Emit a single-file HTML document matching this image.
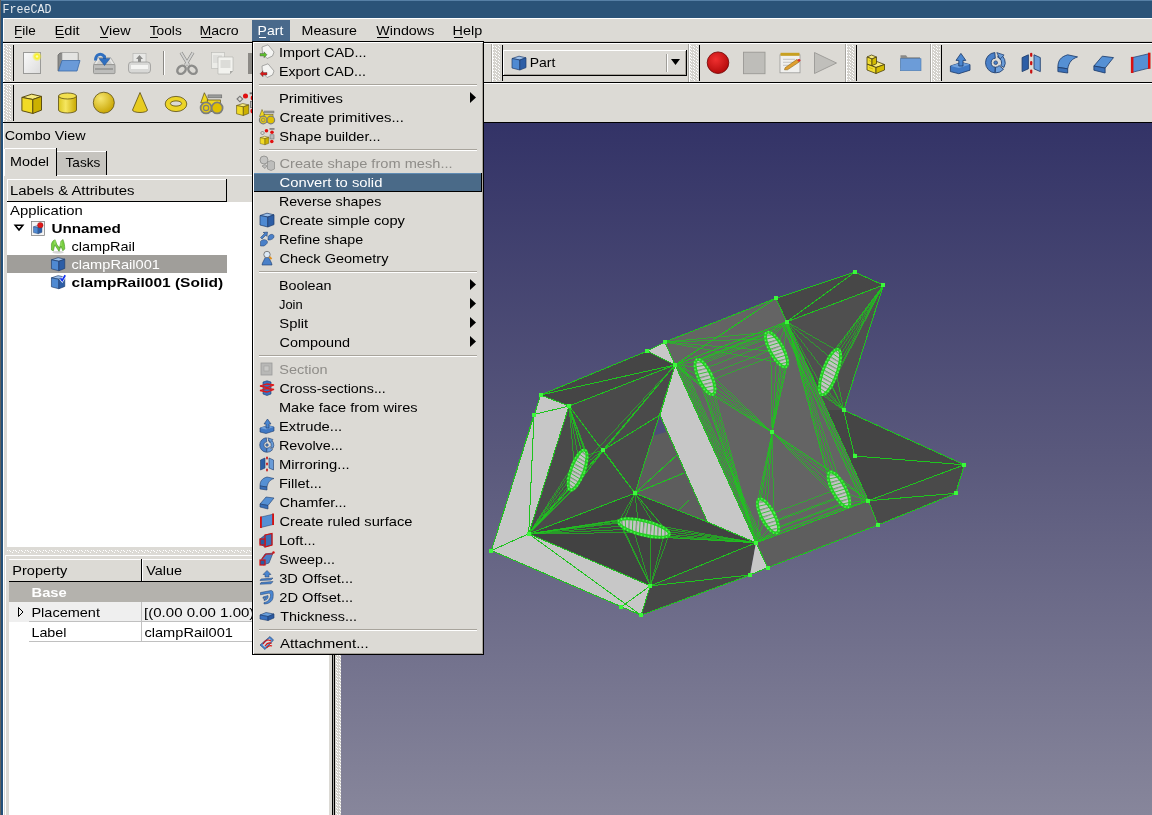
<!DOCTYPE html><html><head><meta charset="utf-8"><style>html,body{margin:0;padding:0;overflow:hidden;background:#dcdad5}svg{display:block;will-change:transform}text{font-family:"Liberation Sans",sans-serif;font-size:13.6px}</style></head><body>
<svg width="1152" height="815" viewBox="0 0 1152 815" shape-rendering="crispEdges">
<defs>
<linearGradient id="vbg" x1="0" y1="0" x2="0" y2="1"><stop offset="0" stop-color="#333367"/><stop offset="0.5" stop-color="#5b5a7d"/><stop offset="1" stop-color="#87869b"/></linearGradient>
<pattern id="grip" x="0" y="0" width="6" height="3" patternUnits="userSpaceOnUse"><rect x="0" y="0" width="1" height="1" fill="#fff"/><rect x="1" y="1" width="1" height="1" fill="#fff"/><rect x="3" y="1" width="1" height="1" fill="#fff"/><rect x="4" y="2" width="1" height="1" fill="#fff"/></pattern>
<pattern id="griph" x="0" y="0" width="3" height="6" patternUnits="userSpaceOnUse"><rect x="0" y="0" width="1" height="1" fill="#fff"/><rect x="1" y="1" width="1" height="1" fill="#fff"/><rect x="1" y="3" width="1" height="1" fill="#fff"/><rect x="2" y="4" width="1" height="1" fill="#fff"/></pattern>
</defs>
<rect x="0" y="0" width="1152" height="815" fill="#dcdad5" />
<rect x="0" y="0" width="1152" height="18" fill="#2b5378" />
<rect x="0" y="0" width="1152" height="1" fill="#5780a6" />
<rect x="0" y="0" width="1" height="815" fill="#606060" />
<rect x="1" y="1" width="2" height="814" fill="#23507a" />
<text x="2.5" y="13" textLength="49" lengthAdjust="spacingAndGlyphs" fill="#f4f6f8" opacity="0.92" style="font-family:'Liberation Mono',monospace;font-size:12.5px">FreeCAD</text>
<rect x="3" y="18" width="1149" height="24" fill="#dcdad5" />
<rect x="3" y="18" width="1149" height="1" fill="#ffffff" />
<rect x="3" y="18" width="1" height="24" fill="#ffffff" />
<rect x="3" y="41" width="1149" height="1" fill="#c8c6c1" />
<rect x="3" y="42" width="1149" height="1" fill="#000000" />
<rect x="252" y="20" width="38" height="21" fill="#49698b" />
<text x="13.92" y="35" textLength="21.76" lengthAdjust="spacingAndGlyphs" fill="#000000">File</text>
<rect x="15" y="37" width="7" height="1" fill="#000000" />
<text x="54.52" y="35" textLength="25.18" lengthAdjust="spacingAndGlyphs" fill="#000000">Edit</text>
<rect x="56" y="37" width="8" height="1" fill="#000000" />
<text x="99.70" y="35" textLength="30.85" lengthAdjust="spacingAndGlyphs" fill="#000000">View</text>
<rect x="100" y="37" width="8" height="1" fill="#000000" />
<text x="149.74" y="35" textLength="32.02" lengthAdjust="spacingAndGlyphs" fill="#000000">Tools</text>
<rect x="150" y="37" width="8" height="1" fill="#000000" />
<text x="199.42" y="35" textLength="39.34" lengthAdjust="spacingAndGlyphs" fill="#000000">Macro</text>
<rect x="201" y="37" width="11" height="1" fill="#000000" />
<text x="257.62" y="35" textLength="25.66" lengthAdjust="spacingAndGlyphs" fill="#ffffff">Part</text>
<rect x="259" y="37" width="7" height="1" fill="#ffffff" />
<text x="301.62" y="35" textLength="55.25" lengthAdjust="spacingAndGlyphs" fill="#000000">Measure</text>
<text x="376.27" y="35" textLength="58.03" lengthAdjust="spacingAndGlyphs" fill="#000000">Windows</text>
<rect x="377" y="37" width="12" height="1" fill="#000000" />
<text x="452.52" y="35" textLength="29.64" lengthAdjust="spacingAndGlyphs" fill="#000000">Help</text>
<rect x="454" y="37" width="9" height="1" fill="#000000" />
<rect x="3" y="43" width="1149" height="1" fill="#ffffff" />
<rect x="3" y="82" width="1149" height="1" fill="#000000" />
<rect x="3" y="43" width="1" height="39" fill="#ffffff" />
<rect x="3" y="83" width="1149" height="1" fill="#ffffff" />
<rect x="3" y="122" width="1149" height="1" fill="#000000" />
<rect x="3" y="83" width="1" height="39" fill="#ffffff" />
<rect x="4" y="45" width="8" height="36" fill="#d4d2cd" />
<rect x="4" y="45" width="8" height="36" fill="url(#grip)" />
<rect x="13" y="45" width="1" height="36" fill="#000" />
<rect x="4" y="85" width="8" height="36" fill="#d4d2cd" />
<rect x="4" y="85" width="8" height="36" fill="url(#grip)" />
<rect x="13" y="85" width="1" height="36" fill="#000" />
<rect x="491" y="44" width="1" height="38" fill="#a8a6a1" />
<rect x="492" y="44" width="1" height="38" fill="#ffffff" />
<rect x="493" y="45" width="8" height="36" fill="#d4d2cd" />
<rect x="493" y="45" width="8" height="36" fill="url(#grip)" />
<rect x="502" y="45" width="1" height="36" fill="#000" />
<rect x="688" y="44" width="1" height="38" fill="#a8a6a1" />
<rect x="689" y="44" width="1" height="38" fill="#ffffff" />
<rect x="690" y="45" width="8" height="36" fill="#d4d2cd" />
<rect x="690" y="45" width="8" height="36" fill="url(#grip)" />
<rect x="699" y="45" width="1" height="36" fill="#000" />
<rect x="845" y="44" width="1" height="38" fill="#a8a6a1" />
<rect x="846" y="44" width="1" height="38" fill="#ffffff" />
<rect x="847" y="45" width="8" height="36" fill="#d4d2cd" />
<rect x="847" y="45" width="8" height="36" fill="url(#grip)" />
<rect x="856" y="45" width="1" height="36" fill="#000" />
<rect x="930" y="44" width="1" height="38" fill="#a8a6a1" />
<rect x="931" y="44" width="1" height="38" fill="#ffffff" />
<rect x="932" y="45" width="8" height="36" fill="#d4d2cd" />
<rect x="932" y="45" width="8" height="36" fill="url(#grip)" />
<rect x="941" y="45" width="1" height="36" fill="#000" />
<rect x="503" y="50" width="184" height="26" fill="#dcdad5" />
<rect x="503" y="50" width="184" height="1" fill="#ffffff" />
<rect x="503" y="50" width="1" height="26" fill="#ffffff" />
<rect x="503" y="75" width="184" height="1" fill="#000000" />
<rect x="686" y="50" width="1" height="26" fill="#000000" />
<rect x="667" y="54" width="1" height="18" fill="#ffffff" />
<rect x="666" y="54" width="1" height="18" fill="#a09e99" />
<rect x="685" y="51" width="1" height="24" fill="#a8a49c" />
<rect x="504" y="74" width="182" height="1" fill="#a8a49c" />
<polygon points="671,59 680,59 675.5,65" fill="#000" shape-rendering="geometricPrecision"/>
<text x="529.72" y="67" textLength="25.66" lengthAdjust="spacingAndGlyphs" fill="#000">Part</text>
<rect x="332" y="123" width="1" height="692" fill="#000" />
<rect x="334" y="123" width="1" height="692" fill="#000" />
<rect x="333" y="123" width="1" height="692" fill="#a8a6a1" />
<rect x="335" y="123" width="8" height="692" fill="#d4d2cd" />
<rect x="335" y="123" width="8" height="692" fill="url(#grip)" />
<rect x="335" y="123" width="6" height="692" fill="url(#grip)" />
<text x="4.67" y="140" textLength="80.88" lengthAdjust="spacingAndGlyphs" fill="#000">Combo View</text>
<rect x="7" y="179" width="325" height="1" fill="#ffffff" />
<rect x="3" y="123" width="1" height="692" fill="#ffffff" />
<rect x="57" y="151" width="50" height="24" fill="#c6c4bf" />
<rect x="57" y="151" width="49" height="1" fill="#ffffff" />
<rect x="106" y="151" width="1" height="24" fill="#000" />
<text x="65.54" y="167" textLength="34.83" lengthAdjust="spacingAndGlyphs" fill="#000">Tasks</text>
<rect x="4" y="148" width="53" height="32" fill="#dcdad5" />
<rect x="5" y="148" width="51" height="1" fill="#ffffff" />
<rect x="4" y="149" width="1" height="27" fill="#ffffff" />
<rect x="56" y="148" width="1" height="28" fill="#000" />
<rect x="57" y="175" width="275" height="1" fill="#ffffff" />
<text x="10.02" y="166" textLength="39.03" lengthAdjust="spacingAndGlyphs" fill="#000">Model</text>
<rect x="7" y="180" width="322" height="367" fill="#ffffff" />
<rect x="7" y="179" width="220" height="23" fill="#dcdad5" />
<rect x="7" y="179" width="220" height="1" fill="#ffffff" />
<rect x="7" y="179" width="1" height="23" fill="#ffffff" />
<rect x="7" y="201" width="220" height="1" fill="#000" />
<rect x="226" y="179" width="1" height="23" fill="#000" />
<rect x="227" y="179" width="102" height="23" fill="#dcdad5" />
<text x="10.02" y="195" textLength="124.42" lengthAdjust="spacingAndGlyphs" fill="#000">Labels &amp; Attributes</text>
<text x="10.10" y="215" textLength="72.64" lengthAdjust="spacingAndGlyphs" fill="#000">Application</text>
<rect x="7" y="255" width="220" height="18" fill="#a09e9a" />
<text x="51.41" y="233" textLength="69.51" lengthAdjust="spacingAndGlyphs" fill="#000" font-weight="bold">Unnamed</text>
<text x="71.48" y="251" textLength="63.58" lengthAdjust="spacingAndGlyphs" fill="#000">clampRail</text>
<text x="71.48" y="269" textLength="88.39" lengthAdjust="spacingAndGlyphs" fill="#ffffff">clampRail001</text>
<text x="71.64" y="287" textLength="151.54" lengthAdjust="spacingAndGlyphs" fill="#000" font-weight="bold">clampRail001 (Solid)</text>
<polygon points="15.2,225.2 22.8,225.2 19,230" fill="none" stroke="#000" stroke-width="1.6" stroke-linejoin="miter" shape-rendering="geometricPrecision"/>
<rect x="4" y="547" width="328" height="8" fill="#dcdad5" />
<rect x="7" y="550" width="322" height="3" fill="url(#grip)"/>
<rect x="4" y="555" width="328" height="260" fill="#dcdad5" />
<rect x="5" y="555" width="327" height="1" fill="#ffffff" />
<rect x="5" y="555" width="1" height="260" fill="#ffffff" />
<rect x="9" y="559" width="320" height="256" fill="#ffffff" />
<rect x="9" y="559" width="320" height="22" fill="#dcdad5" />
<rect x="9" y="559" width="320" height="1" fill="#ffffff" />
<rect x="9" y="581" width="320" height="1" fill="#000" />
<rect x="141" y="559" width="1" height="22" fill="#000" />
<rect x="142" y="560" width="1" height="21" fill="#ffffff" />
<text x="12.32" y="575" textLength="55.01" lengthAdjust="spacingAndGlyphs" fill="#000">Property</text>
<text x="146.30" y="575" textLength="35.70" lengthAdjust="spacingAndGlyphs" fill="#000">Value</text>
<rect x="9" y="582" width="320" height="20" fill="#b4b2ad" />
<text x="31.51" y="597" textLength="35.24" lengthAdjust="spacingAndGlyphs" fill="#ffffff" font-weight="bold">Base</text>
<rect x="9" y="602" width="320" height="20" fill="#efefef" />
<rect x="29" y="621" width="300" height="1" fill="#c0c0c0" />
<rect x="29" y="641" width="300" height="1" fill="#c0c0c0" />
<rect x="141" y="602" width="1" height="39" fill="#c0c0c0" />
<text x="31.42" y="617" textLength="68.56" lengthAdjust="spacingAndGlyphs" fill="#000">Placement</text>
<text x="144.08" y="617" textLength="110.31" lengthAdjust="spacingAndGlyphs" fill="#000">[(0.00 0.00 1.00)</text>
<text x="31.42" y="637" textLength="35.07" lengthAdjust="spacingAndGlyphs" fill="#000">Label</text>
<text x="144.48" y="637" textLength="88.39" lengthAdjust="spacingAndGlyphs" fill="#000">clampRail001</text>
<polygon points="18.5,607.5 18.5,616.5 23,612" fill="none" stroke="#000" stroke-width="1" shape-rendering="geometricPrecision"/>
<rect x="341" y="123" width="811" height="692" fill="url(#vbg)" />
<rect x="335" y="122" width="817" height="1" fill="#000" />
<g shape-rendering="geometricPrecision">
<polygon points="827,410 843.6,410.1 964.4,464.8 868.4,500.7" fill="#454545"/>
<polygon points="868.4,500.7 964.4,464.8 955.6,493.4 878.1,524.9" fill="#4a4a4a"/>
<polygon points="775.9,298.3 854.8,272.2 883.4,285.1 786.7,321.8" fill="#474747"/>
<polygon points="786.7,321.8 883.4,285.1 843.6,410.1 827,410" fill="#4f4f4f"/>
<polygon points="569,406 675.1,364.9 635,493.2 528.7,533.8" fill="#4a4a4a"/>
<polygon points="675.1,364.9 660,415 707.5,522 635,493.2" fill="#5d5d5d"/>
<polygon points="660,415 654,435.6 666,432" fill="#4e4d78"/>
<polygon points="528.7,533.8 635,493.2 707.5,522 756,542.8 650.4,585.8" fill="#424242"/>
<polygon points="540.6,395 647.4,351 675.1,364.9 569,406" fill="#454545"/>
<polygon points="647.4,351 664.8,342 675.1,364.9" fill="#c7c7c7"/>
<polygon points="540.6,395 569,406 528.7,533.8 491.4,550.5" fill="#c7c7c7"/>
<polygon points="491.4,550.5 528.7,533.8 650.4,585.8 641,615.2" fill="#c7c7c7"/>
<polygon points="650.4,585.8 756,542.8 750,575 641,615.2" fill="#474747"/>
<polygon points="675.1,364.9 756,542.8 707.5,522 660,415" fill="#c7c7c7"/>
<polygon points="664.8,342 775.9,298.3 786.7,321.8 675.1,364.9" fill="#646464"/>
<polygon points="675.1,364.9 786.7,321.8 868.4,500.7 756,542.8" fill="#646464"/>
<polygon points="756,542.8 868.4,500.7 878.1,524.9 767.7,567.6" fill="#5e5e5e"/>
<polygon points="756,542.8 767.7,567.6 750,575" fill="#c7c7c7"/>
<g shape-rendering="crispEdges">
<line x1="491.4" y1="550.5" x2="540.6" y2="395" stroke="#1ec41e" stroke-width="1"/>
<line x1="540.6" y1="395" x2="647.4" y2="351" stroke="#1ec41e" stroke-width="1"/>
<line x1="647.4" y1="351" x2="664.8" y2="342" stroke="#1ec41e" stroke-width="1"/>
<line x1="664.8" y1="342" x2="775.9" y2="298.3" stroke="#1ec41e" stroke-width="1"/>
<line x1="775.9" y1="298.3" x2="854.8" y2="272.2" stroke="#1ec41e" stroke-width="1"/>
<line x1="854.8" y1="272.2" x2="883.4" y2="285.1" stroke="#1ec41e" stroke-width="1"/>
<line x1="883.4" y1="285.1" x2="843.6" y2="410.1" stroke="#1ec41e" stroke-width="1"/>
<line x1="843.6" y1="410.1" x2="964.4" y2="464.8" stroke="#1ec41e" stroke-width="1"/>
<line x1="964.4" y1="464.8" x2="955.6" y2="493.4" stroke="#1ec41e" stroke-width="1"/>
<line x1="955.6" y1="493.4" x2="878.1" y2="524.9" stroke="#1ec41e" stroke-width="1"/>
<line x1="878.1" y1="524.9" x2="767.7" y2="567.6" stroke="#1ec41e" stroke-width="1"/>
<line x1="767.7" y1="567.6" x2="750" y2="575" stroke="#1ec41e" stroke-width="1"/>
<line x1="750" y1="575" x2="641" y2="615.2" stroke="#1ec41e" stroke-width="1"/>
<line x1="641" y1="615.2" x2="491.4" y2="550.5" stroke="#1ec41e" stroke-width="1"/>
<line x1="540.6" y1="395" x2="569" y2="406" stroke="#1ec41e" stroke-width="1"/>
<line x1="540.6" y1="395" x2="675.1" y2="364.9" stroke="#1ec41e" stroke-width="1"/>
<line x1="569" y1="406" x2="675.1" y2="364.9" stroke="#1ec41e" stroke-width="1"/>
<line x1="647.4" y1="351" x2="675.1" y2="364.9" stroke="#1ec41e" stroke-width="1"/>
<line x1="664.8" y1="342" x2="675.1" y2="364.9" stroke="#1ec41e" stroke-width="1"/>
<line x1="675.1" y1="364.9" x2="786.7" y2="321.8" stroke="#1ec41e" stroke-width="1"/>
<line x1="775.9" y1="298.3" x2="786.7" y2="321.8" stroke="#1ec41e" stroke-width="1"/>
<line x1="786.7" y1="321.8" x2="883.4" y2="285.1" stroke="#1ec41e" stroke-width="1"/>
<line x1="786.7" y1="321.8" x2="868.4" y2="500.7" stroke="#1ec41e" stroke-width="1"/>
<line x1="868.4" y1="500.7" x2="756" y2="542.8" stroke="#1ec41e" stroke-width="1"/>
<line x1="756" y1="542.8" x2="675.1" y2="364.9" stroke="#1ec41e" stroke-width="1"/>
<line x1="868.4" y1="500.7" x2="964.4" y2="464.8" stroke="#1ec41e" stroke-width="1"/>
<line x1="868.4" y1="500.7" x2="878.1" y2="524.9" stroke="#1ec41e" stroke-width="1"/>
<line x1="756" y1="542.8" x2="767.7" y2="567.6" stroke="#1ec41e" stroke-width="1"/>
<line x1="569" y1="406" x2="528.7" y2="533.8" stroke="#1ec41e" stroke-width="1"/>
<line x1="528.7" y1="533.8" x2="491.4" y2="550.5" stroke="#1ec41e" stroke-width="1"/>
<line x1="528.7" y1="533.8" x2="650.4" y2="585.8" stroke="#1ec41e" stroke-width="1"/>
<line x1="650.4" y1="585.8" x2="641" y2="615.2" stroke="#1ec41e" stroke-width="1"/>
<line x1="650.4" y1="585.8" x2="756" y2="542.8" stroke="#1ec41e" stroke-width="1"/>
<line x1="534.1" y1="414.5" x2="569" y2="406" stroke="#1ec41e" stroke-width="1"/>
<line x1="491.4" y1="550.5" x2="534.1" y2="414.5" stroke="#1ec41e" stroke-width="1"/>
<line x1="534.1" y1="414.5" x2="528.7" y2="533.8" stroke="#1ec41e" stroke-width="1"/>
<line x1="621.3" y1="606.8" x2="650.4" y2="585.8" stroke="#1ec41e" stroke-width="1"/>
<line x1="491.4" y1="550.5" x2="621.3" y2="606.8" stroke="#1ec41e" stroke-width="1"/>
<line x1="528.7" y1="533.8" x2="635" y2="493.2" stroke="#1ec41e" stroke-width="1"/>
<line x1="635" y1="493.2" x2="603" y2="450.2" stroke="#1ec41e" stroke-width="1"/>
<line x1="603" y1="450.2" x2="660" y2="415" stroke="#1ec41e" stroke-width="1"/>
<line x1="603" y1="450.2" x2="675.1" y2="364.9" stroke="#1ec41e" stroke-width="1"/>
<line x1="635" y1="493.2" x2="675.1" y2="364.9" stroke="#1ec41e" stroke-width="1"/>
<line x1="660" y1="415" x2="707.5" y2="522" stroke="#1ec41e" stroke-width="1"/>
<line x1="707.5" y1="522" x2="756" y2="542.8" stroke="#1ec41e" stroke-width="1"/>
<line x1="635" y1="493.2" x2="707.5" y2="522" stroke="#1ec41e" stroke-width="1"/>
<line x1="854.8" y1="272.2" x2="786.7" y2="321.8" stroke="#1ec41e" stroke-width="1"/>
<line x1="675.1" y1="364.9" x2="775.9" y2="298.3" stroke="#1ec41e" stroke-width="1"/>
<line x1="854.6" y1="456" x2="964.4" y2="464.8" stroke="#1ec41e" stroke-width="1"/>
<line x1="868.4" y1="500.7" x2="955.6" y2="493.4" stroke="#1ec41e" stroke-width="1"/>
<line x1="843.6" y1="410.1" x2="854.6" y2="456" stroke="#1ec41e" stroke-width="1"/>
<line x1="650.4" y1="585.8" x2="750" y2="575" stroke="#1ec41e" stroke-width="1"/>
<line x1="528.7" y1="533.8" x2="641" y2="615.2" stroke="#1ec41e" stroke-width="1"/>
<line x1="569" y1="406" x2="635" y2="493.2" stroke="#1ec41e" stroke-width="1"/>
<line x1="603" y1="450.2" x2="528.7" y2="533.8" stroke="#1ec41e" stroke-width="1"/>
<line x1="675.1" y1="364.9" x2="660" y2="415" stroke="#1ec41e" stroke-width="1"/>
</g>
<g shape-rendering="crispEdges">
<line x1="695.0" y1="364.3" x2="765.5" y2="337.2" stroke="#1ec41e" stroke-width="0.8" opacity="0.85"/>
<line x1="695.8" y1="361.0" x2="765.9" y2="333.7" stroke="#1ec41e" stroke-width="0.8" opacity="0.85"/>
<line x1="697.6" y1="359.6" x2="767.7" y2="332.2" stroke="#1ec41e" stroke-width="0.8" opacity="0.85"/>
<line x1="700.4" y1="360.3" x2="770.5" y2="332.8" stroke="#1ec41e" stroke-width="0.8" opacity="0.85"/>
<line x1="703.7" y1="363.2" x2="774.1" y2="335.5" stroke="#1ec41e" stroke-width="0.8" opacity="0.85"/>
<line x1="707.2" y1="367.7" x2="778.0" y2="339.9" stroke="#1ec41e" stroke-width="0.8" opacity="0.85"/>
<line x1="710.5" y1="373.3" x2="781.7" y2="345.5" stroke="#1ec41e" stroke-width="0.8" opacity="0.85"/>
<line x1="713.0" y1="379.5" x2="784.7" y2="351.5" stroke="#1ec41e" stroke-width="0.8" opacity="0.85"/>
<line x1="713.0" y1="394.2" x2="675.1" y2="364.9" stroke="#1ec41e" stroke-width="0.8" opacity="0.85"/>
<line x1="709.5" y1="393.6" x2="675.1" y2="364.9" stroke="#1ec41e" stroke-width="0.8" opacity="0.85"/>
<line x1="705.0" y1="389.3" x2="675.1" y2="364.9" stroke="#1ec41e" stroke-width="0.8" opacity="0.85"/>
<line x1="700.4" y1="382.4" x2="675.1" y2="364.9" stroke="#1ec41e" stroke-width="0.8" opacity="0.85"/>
<line x1="696.9" y1="374.3" x2="675.1" y2="364.9" stroke="#1ec41e" stroke-width="0.8" opacity="0.85"/>
<line x1="695.2" y1="366.8" x2="675.1" y2="364.9" stroke="#1ec41e" stroke-width="0.8" opacity="0.85"/>
<line x1="695.5" y1="361.5" x2="675.1" y2="364.9" stroke="#1ec41e" stroke-width="0.8" opacity="0.85"/>
<line x1="710.9" y1="374.3" x2="772.1" y2="432.4" stroke="#1ec41e" stroke-width="0.8" opacity="0.85"/>
<line x1="713.4" y1="380.8" x2="772.1" y2="432.4" stroke="#1ec41e" stroke-width="0.8" opacity="0.85"/>
<line x1="714.8" y1="386.8" x2="772.1" y2="432.4" stroke="#1ec41e" stroke-width="0.8" opacity="0.85"/>
<line x1="714.8" y1="391.4" x2="772.1" y2="432.4" stroke="#1ec41e" stroke-width="0.8" opacity="0.85"/>
<line x1="713.4" y1="394.0" x2="772.1" y2="432.4" stroke="#1ec41e" stroke-width="0.8" opacity="0.85"/>
<line x1="710.8" y1="394.2" x2="772.1" y2="432.4" stroke="#1ec41e" stroke-width="0.8" opacity="0.85"/>
<line x1="714.5" y1="392.5" x2="756.0" y2="542.8" stroke="#1ec41e" stroke-width="0.8" opacity="0.85"/>
<line x1="712.6" y1="394.4" x2="756.0" y2="542.8" stroke="#1ec41e" stroke-width="0.8" opacity="0.85"/>
<line x1="709.8" y1="393.8" x2="756.0" y2="542.8" stroke="#1ec41e" stroke-width="0.8" opacity="0.85"/>
<line x1="706.2" y1="390.8" x2="756.0" y2="542.8" stroke="#1ec41e" stroke-width="0.8" opacity="0.85"/>
<line x1="702.5" y1="385.9" x2="756.0" y2="542.8" stroke="#1ec41e" stroke-width="0.8" opacity="0.85"/>
<line x1="699.1" y1="379.7" x2="756.0" y2="542.8" stroke="#1ec41e" stroke-width="0.8" opacity="0.85"/>
<line x1="765.5" y1="337.6" x2="786.7" y2="321.8" stroke="#1ec41e" stroke-width="0.8" opacity="0.85"/>
<line x1="766.3" y1="333.1" x2="786.7" y2="321.8" stroke="#1ec41e" stroke-width="0.8" opacity="0.85"/>
<line x1="769.4" y1="332.3" x2="786.7" y2="321.8" stroke="#1ec41e" stroke-width="0.8" opacity="0.85"/>
<line x1="774.1" y1="335.5" x2="786.7" y2="321.8" stroke="#1ec41e" stroke-width="0.8" opacity="0.85"/>
<line x1="779.4" y1="341.8" x2="786.7" y2="321.8" stroke="#1ec41e" stroke-width="0.8" opacity="0.85"/>
<line x1="783.9" y1="349.8" x2="786.7" y2="321.8" stroke="#1ec41e" stroke-width="0.8" opacity="0.85"/>
<line x1="782.2" y1="346.3" x2="772.1" y2="432.4" stroke="#1ec41e" stroke-width="0.8" opacity="0.85"/>
<line x1="786.2" y1="355.3" x2="772.1" y2="432.4" stroke="#1ec41e" stroke-width="0.8" opacity="0.85"/>
<line x1="787.5" y1="362.7" x2="772.1" y2="432.4" stroke="#1ec41e" stroke-width="0.8" opacity="0.85"/>
<line x1="786.0" y1="366.6" x2="772.1" y2="432.4" stroke="#1ec41e" stroke-width="0.8" opacity="0.85"/>
<line x1="781.8" y1="365.8" x2="772.1" y2="432.4" stroke="#1ec41e" stroke-width="0.8" opacity="0.85"/>
<line x1="776.3" y1="360.8" x2="772.1" y2="432.4" stroke="#1ec41e" stroke-width="0.8" opacity="0.85"/>
<line x1="770.8" y1="352.7" x2="772.1" y2="432.4" stroke="#1ec41e" stroke-width="0.8" opacity="0.85"/>
<line x1="777.5" y1="362.1" x2="664.8" y2="342.0" stroke="#1ec41e" stroke-width="0.8" opacity="0.85"/>
<line x1="769.9" y1="350.9" x2="664.8" y2="342.0" stroke="#1ec41e" stroke-width="0.8" opacity="0.85"/>
<line x1="765.7" y1="338.9" x2="664.8" y2="342.0" stroke="#1ec41e" stroke-width="0.8" opacity="0.85"/>
<line x1="767.0" y1="332.4" x2="664.8" y2="342.0" stroke="#1ec41e" stroke-width="0.8" opacity="0.85"/>
<line x1="762.3" y1="519.1" x2="772.1" y2="432.4" stroke="#1ec41e" stroke-width="0.8" opacity="0.85"/>
<line x1="758.1" y1="508.6" x2="772.1" y2="432.4" stroke="#1ec41e" stroke-width="0.8" opacity="0.85"/>
<line x1="757.7" y1="501.0" x2="772.1" y2="432.4" stroke="#1ec41e" stroke-width="0.8" opacity="0.85"/>
<line x1="761.3" y1="499.1" x2="772.1" y2="432.4" stroke="#1ec41e" stroke-width="0.8" opacity="0.85"/>
<line x1="767.4" y1="503.7" x2="772.1" y2="432.4" stroke="#1ec41e" stroke-width="0.8" opacity="0.85"/>
<line x1="773.7" y1="512.9" x2="772.1" y2="432.4" stroke="#1ec41e" stroke-width="0.8" opacity="0.85"/>
<line x1="778.6" y1="527.8" x2="756.0" y2="542.8" stroke="#1ec41e" stroke-width="0.8" opacity="0.85"/>
<line x1="777.6" y1="532.3" x2="756.0" y2="542.8" stroke="#1ec41e" stroke-width="0.8" opacity="0.85"/>
<line x1="774.2" y1="532.7" x2="756.0" y2="542.8" stroke="#1ec41e" stroke-width="0.8" opacity="0.85"/>
<line x1="769.3" y1="529.0" x2="756.0" y2="542.8" stroke="#1ec41e" stroke-width="0.8" opacity="0.85"/>
<line x1="764.0" y1="522.1" x2="756.0" y2="542.8" stroke="#1ec41e" stroke-width="0.8" opacity="0.85"/>
<line x1="759.8" y1="513.7" x2="756.0" y2="542.8" stroke="#1ec41e" stroke-width="0.8" opacity="0.85"/>
<line x1="773.7" y1="512.9" x2="844.7" y2="486.4" stroke="#1ec41e" stroke-width="0.8" opacity="0.85"/>
<line x1="777.2" y1="520.9" x2="848.3" y2="494.6" stroke="#1ec41e" stroke-width="0.8" opacity="0.85"/>
<line x1="778.6" y1="527.8" x2="849.8" y2="501.6" stroke="#1ec41e" stroke-width="0.8" opacity="0.85"/>
<line x1="777.7" y1="532.1" x2="848.9" y2="506.0" stroke="#1ec41e" stroke-width="0.8" opacity="0.85"/>
<line x1="774.7" y1="532.9" x2="845.9" y2="506.8" stroke="#1ec41e" stroke-width="0.8" opacity="0.85"/>
<line x1="770.2" y1="530.0" x2="841.4" y2="503.8" stroke="#1ec41e" stroke-width="0.8" opacity="0.85"/>
<line x1="765.3" y1="524.1" x2="836.4" y2="497.7" stroke="#1ec41e" stroke-width="0.8" opacity="0.85"/>
<line x1="836.4" y1="497.7" x2="772.1" y2="432.4" stroke="#1ec41e" stroke-width="0.8" opacity="0.85"/>
<line x1="831.6" y1="489.3" x2="772.1" y2="432.4" stroke="#1ec41e" stroke-width="0.8" opacity="0.85"/>
<line x1="828.7" y1="480.9" x2="772.1" y2="432.4" stroke="#1ec41e" stroke-width="0.8" opacity="0.85"/>
<line x1="828.4" y1="474.6" x2="772.1" y2="432.4" stroke="#1ec41e" stroke-width="0.8" opacity="0.85"/>
<line x1="830.6" y1="472.0" x2="772.1" y2="432.4" stroke="#1ec41e" stroke-width="0.8" opacity="0.85"/>
<line x1="835.0" y1="473.8" x2="772.1" y2="432.4" stroke="#1ec41e" stroke-width="0.8" opacity="0.85"/>
<line x1="832.1" y1="472.2" x2="868.4" y2="500.7" stroke="#1ec41e" stroke-width="0.8" opacity="0.85"/>
<line x1="837.6" y1="476.2" x2="868.4" y2="500.7" stroke="#1ec41e" stroke-width="0.8" opacity="0.85"/>
<line x1="843.5" y1="484.3" x2="868.4" y2="500.7" stroke="#1ec41e" stroke-width="0.8" opacity="0.85"/>
<line x1="848.1" y1="494.1" x2="868.4" y2="500.7" stroke="#1ec41e" stroke-width="0.8" opacity="0.85"/>
<line x1="849.8" y1="502.4" x2="868.4" y2="500.7" stroke="#1ec41e" stroke-width="0.8" opacity="0.85"/>
<line x1="848.2" y1="506.7" x2="868.4" y2="500.7" stroke="#1ec41e" stroke-width="0.8" opacity="0.85"/>
<line x1="829.0" y1="481.8" x2="786.7" y2="321.8" stroke="#1ec41e" stroke-width="0.8" opacity="0.85"/>
<line x1="828.2" y1="475.5" x2="786.7" y2="321.8" stroke="#1ec41e" stroke-width="0.8" opacity="0.85"/>
<line x1="829.8" y1="472.3" x2="786.7" y2="321.8" stroke="#1ec41e" stroke-width="0.8" opacity="0.85"/>
<line x1="833.4" y1="472.8" x2="786.7" y2="321.8" stroke="#1ec41e" stroke-width="0.8" opacity="0.85"/>
<line x1="838.3" y1="476.9" x2="786.7" y2="321.8" stroke="#1ec41e" stroke-width="0.8" opacity="0.85"/>
<line x1="676.0" y1="366.0" x2="756.0" y2="542.0" stroke="#1ec41e" stroke-width="0.8" opacity="0.85"/>
<line x1="677.4" y1="365.6" x2="757.4" y2="541.6" stroke="#1ec41e" stroke-width="0.8" opacity="0.85"/>
<line x1="678.8" y1="365.2" x2="758.8" y2="541.2" stroke="#1ec41e" stroke-width="0.8" opacity="0.85"/>
<line x1="680.2" y1="364.8" x2="760.2" y2="540.8" stroke="#1ec41e" stroke-width="0.8" opacity="0.85"/>
<line x1="681.6" y1="364.4" x2="761.6" y2="540.4" stroke="#1ec41e" stroke-width="0.8" opacity="0.85"/>
<line x1="683.0" y1="364.0" x2="763.0" y2="540.0" stroke="#1ec41e" stroke-width="0.8" opacity="0.85"/>
<line x1="787.0" y1="323.0" x2="868.0" y2="500.0" stroke="#1ec41e" stroke-width="0.8" opacity="0.85"/>
<line x1="785.8" y1="323.5" x2="866.5" y2="500.5" stroke="#1ec41e" stroke-width="0.8" opacity="0.85"/>
<line x1="784.5" y1="324.0" x2="865.0" y2="501.0" stroke="#1ec41e" stroke-width="0.8" opacity="0.85"/>
<line x1="783.2" y1="324.5" x2="863.5" y2="501.5" stroke="#1ec41e" stroke-width="0.8" opacity="0.85"/>
<line x1="782.0" y1="325.0" x2="862.0" y2="502.0" stroke="#1ec41e" stroke-width="0.8" opacity="0.85"/>
<line x1="829.5" y1="356.8" x2="883.4" y2="285.1" stroke="#1ec41e" stroke-width="0.8" opacity="0.85"/>
<line x1="833.5" y1="351.6" x2="883.4" y2="285.1" stroke="#1ec41e" stroke-width="0.8" opacity="0.85"/>
<line x1="837.0" y1="349.4" x2="883.4" y2="285.1" stroke="#1ec41e" stroke-width="0.8" opacity="0.85"/>
<line x1="839.4" y1="350.5" x2="883.4" y2="285.1" stroke="#1ec41e" stroke-width="0.8" opacity="0.85"/>
<line x1="840.5" y1="354.9" x2="883.4" y2="285.1" stroke="#1ec41e" stroke-width="0.8" opacity="0.85"/>
<line x1="840.0" y1="361.7" x2="883.4" y2="285.1" stroke="#1ec41e" stroke-width="0.8" opacity="0.85"/>
<line x1="838.0" y1="370.1" x2="883.4" y2="285.1" stroke="#1ec41e" stroke-width="0.8" opacity="0.85"/>
<line x1="834.8" y1="378.8" x2="883.4" y2="285.1" stroke="#1ec41e" stroke-width="0.8" opacity="0.85"/>
<line x1="836.6" y1="374.4" x2="843.6" y2="410.1" stroke="#1ec41e" stroke-width="0.8" opacity="0.85"/>
<line x1="831.6" y1="385.3" x2="843.6" y2="410.1" stroke="#1ec41e" stroke-width="0.8" opacity="0.85"/>
<line x1="826.2" y1="392.7" x2="843.6" y2="410.1" stroke="#1ec41e" stroke-width="0.8" opacity="0.85"/>
<line x1="821.8" y1="394.6" x2="843.6" y2="410.1" stroke="#1ec41e" stroke-width="0.8" opacity="0.85"/>
<line x1="819.6" y1="390.3" x2="843.6" y2="410.1" stroke="#1ec41e" stroke-width="0.8" opacity="0.85"/>
<line x1="820.2" y1="381.2" x2="843.6" y2="410.1" stroke="#1ec41e" stroke-width="0.8" opacity="0.85"/>
<line x1="823.4" y1="369.6" x2="843.6" y2="410.1" stroke="#1ec41e" stroke-width="0.8" opacity="0.85"/>
<line x1="820.2" y1="392.7" x2="786.7" y2="321.8" stroke="#1ec41e" stroke-width="0.8" opacity="0.85"/>
<line x1="819.9" y1="383.3" x2="786.7" y2="321.8" stroke="#1ec41e" stroke-width="0.8" opacity="0.85"/>
<line x1="823.4" y1="369.6" x2="786.7" y2="321.8" stroke="#1ec41e" stroke-width="0.8" opacity="0.85"/>
<line x1="829.5" y1="356.8" x2="786.7" y2="321.8" stroke="#1ec41e" stroke-width="0.8" opacity="0.85"/>
<line x1="835.8" y1="349.8" x2="786.7" y2="321.8" stroke="#1ec41e" stroke-width="0.8" opacity="0.85"/>
<line x1="574.0" y1="461.8" x2="569.0" y2="406.0" stroke="#1ec41e" stroke-width="0.8" opacity="0.85"/>
<line x1="577.9" y1="455.1" x2="569.0" y2="406.0" stroke="#1ec41e" stroke-width="0.8" opacity="0.85"/>
<line x1="581.7" y1="451.1" x2="569.0" y2="406.0" stroke="#1ec41e" stroke-width="0.8" opacity="0.85"/>
<line x1="584.8" y1="450.3" x2="569.0" y2="406.0" stroke="#1ec41e" stroke-width="0.8" opacity="0.85"/>
<line x1="586.6" y1="452.9" x2="569.0" y2="406.0" stroke="#1ec41e" stroke-width="0.8" opacity="0.85"/>
<line x1="586.9" y1="458.4" x2="569.0" y2="406.0" stroke="#1ec41e" stroke-width="0.8" opacity="0.85"/>
<line x1="585.6" y1="466.0" x2="569.0" y2="406.0" stroke="#1ec41e" stroke-width="0.8" opacity="0.85"/>
<line x1="578.3" y1="483.4" x2="528.7" y2="533.8" stroke="#1ec41e" stroke-width="0.8" opacity="0.85"/>
<line x1="575.0" y1="487.7" x2="528.7" y2="533.8" stroke="#1ec41e" stroke-width="0.8" opacity="0.85"/>
<line x1="572.0" y1="489.7" x2="528.7" y2="533.8" stroke="#1ec41e" stroke-width="0.8" opacity="0.85"/>
<line x1="569.7" y1="489.3" x2="528.7" y2="533.8" stroke="#1ec41e" stroke-width="0.8" opacity="0.85"/>
<line x1="568.4" y1="486.3" x2="528.7" y2="533.8" stroke="#1ec41e" stroke-width="0.8" opacity="0.85"/>
<line x1="568.3" y1="481.3" x2="528.7" y2="533.8" stroke="#1ec41e" stroke-width="0.8" opacity="0.85"/>
<line x1="569.4" y1="474.9" x2="528.7" y2="533.8" stroke="#1ec41e" stroke-width="0.8" opacity="0.85"/>
<line x1="571.5" y1="467.8" x2="528.7" y2="533.8" stroke="#1ec41e" stroke-width="0.8" opacity="0.85"/>
<line x1="587.0" y1="455.3" x2="603.0" y2="450.2" stroke="#1ec41e" stroke-width="0.8" opacity="0.85"/>
<line x1="586.3" y1="463.0" x2="603.0" y2="450.2" stroke="#1ec41e" stroke-width="0.8" opacity="0.85"/>
<line x1="583.7" y1="472.2" x2="603.0" y2="450.2" stroke="#1ec41e" stroke-width="0.8" opacity="0.85"/>
<line x1="579.8" y1="480.9" x2="603.0" y2="450.2" stroke="#1ec41e" stroke-width="0.8" opacity="0.85"/>
<line x1="575.4" y1="487.3" x2="603.0" y2="450.2" stroke="#1ec41e" stroke-width="0.8" opacity="0.85"/>
<line x1="634.6" y1="532.5" x2="528.7" y2="533.8" stroke="#1ec41e" stroke-width="0.8" opacity="0.85"/>
<line x1="626.9" y1="529.4" x2="528.7" y2="533.8" stroke="#1ec41e" stroke-width="0.8" opacity="0.85"/>
<line x1="621.5" y1="526.1" x2="528.7" y2="533.8" stroke="#1ec41e" stroke-width="0.8" opacity="0.85"/>
<line x1="618.9" y1="523.0" x2="528.7" y2="533.8" stroke="#1ec41e" stroke-width="0.8" opacity="0.85"/>
<line x1="619.5" y1="520.6" x2="528.7" y2="533.8" stroke="#1ec41e" stroke-width="0.8" opacity="0.85"/>
<line x1="623.2" y1="519.1" x2="528.7" y2="533.8" stroke="#1ec41e" stroke-width="0.8" opacity="0.85"/>
<line x1="629.6" y1="518.8" x2="528.7" y2="533.8" stroke="#1ec41e" stroke-width="0.8" opacity="0.85"/>
<line x1="637.8" y1="519.6" x2="528.7" y2="533.8" stroke="#1ec41e" stroke-width="0.8" opacity="0.85"/>
<line x1="669.2" y1="534.3" x2="650.4" y2="585.8" stroke="#1ec41e" stroke-width="0.8" opacity="0.85"/>
<line x1="663.4" y1="537.1" x2="650.4" y2="585.8" stroke="#1ec41e" stroke-width="0.8" opacity="0.85"/>
<line x1="650.2" y1="536.4" x2="650.4" y2="585.8" stroke="#1ec41e" stroke-width="0.8" opacity="0.85"/>
<line x1="634.6" y1="532.5" x2="650.4" y2="585.8" stroke="#1ec41e" stroke-width="0.8" opacity="0.85"/>
<line x1="622.6" y1="526.9" x2="650.4" y2="585.8" stroke="#1ec41e" stroke-width="0.8" opacity="0.85"/>
<line x1="618.8" y1="521.7" x2="650.4" y2="585.8" stroke="#1ec41e" stroke-width="0.8" opacity="0.85"/>
<line x1="618.8" y1="521.7" x2="635.0" y2="493.2" stroke="#1ec41e" stroke-width="0.8" opacity="0.85"/>
<line x1="624.6" y1="518.9" x2="635.0" y2="493.2" stroke="#1ec41e" stroke-width="0.8" opacity="0.85"/>
<line x1="637.8" y1="519.6" x2="635.0" y2="493.2" stroke="#1ec41e" stroke-width="0.8" opacity="0.85"/>
<line x1="653.4" y1="523.5" x2="635.0" y2="493.2" stroke="#1ec41e" stroke-width="0.8" opacity="0.85"/>
<line x1="665.4" y1="529.1" x2="635.0" y2="493.2" stroke="#1ec41e" stroke-width="0.8" opacity="0.85"/>
<line x1="669.2" y1="534.3" x2="635.0" y2="493.2" stroke="#1ec41e" stroke-width="0.8" opacity="0.85"/>
<line x1="660.2" y1="526.2" x2="756.0" y2="542.8" stroke="#1ec41e" stroke-width="0.8" opacity="0.85"/>
<line x1="665.4" y1="529.1" x2="756.0" y2="542.8" stroke="#1ec41e" stroke-width="0.8" opacity="0.85"/>
<line x1="668.5" y1="531.9" x2="756.0" y2="542.8" stroke="#1ec41e" stroke-width="0.8" opacity="0.85"/>
<line x1="669.2" y1="534.3" x2="756.0" y2="542.8" stroke="#1ec41e" stroke-width="0.8" opacity="0.85"/>
<line x1="667.5" y1="536.1" x2="756.0" y2="542.8" stroke="#1ec41e" stroke-width="0.8" opacity="0.85"/>
<line x1="663.4" y1="537.1" x2="756.0" y2="542.8" stroke="#1ec41e" stroke-width="0.8" opacity="0.85"/>
<line x1="657.5" y1="537.2" x2="756.0" y2="542.8" stroke="#1ec41e" stroke-width="0.8" opacity="0.85"/>
<line x1="586.8" y1="460.2" x2="675.1" y2="364.9" stroke="#1ec41e" stroke-width="0.8" opacity="0.85"/>
<line x1="581.2" y1="478.2" x2="675.1" y2="364.9" stroke="#1ec41e" stroke-width="0.8" opacity="0.85"/>
<line x1="635.0" y1="493.2" x2="677.0" y2="455.0" stroke="#1ec41e" stroke-width="1" opacity="1"/>
<line x1="635.0" y1="493.2" x2="684.0" y2="473.0" stroke="#1ec41e" stroke-width="1" opacity="1"/>
<line x1="679.0" y1="510.0" x2="689.0" y2="500.0" stroke="#1ec41e" stroke-width="1" opacity="1"/>
</g>
<g transform="translate(577.6,470) rotate(20)"><ellipse cx="0" cy="0" rx="6.5" ry="21" fill="#c4c4c4"/>
<line x1="-2.6" y1="-19.2" x2="2.6" y2="-16.8" stroke="#2cc02c" stroke-width="0.8"/>
<line x1="-1.8" y1="-18.1" x2="1.8" y2="-17.1" stroke="#9a9a9a" stroke-width="1"/>
<line x1="-4.3" y1="-15.8" x2="4.3" y2="-13.2" stroke="#2cc02c" stroke-width="0.8"/>
<line x1="-5.3" y1="-12.2" x2="5.3" y2="-9.8" stroke="#2cc02c" stroke-width="0.8"/>
<line x1="-3.7" y1="-11.1" x2="3.7" y2="-10.1" stroke="#9a9a9a" stroke-width="1"/>
<line x1="-5.9" y1="-8.8" x2="5.9" y2="-6.2" stroke="#2cc02c" stroke-width="0.8"/>
<line x1="-6.3" y1="-5.2" x2="6.3" y2="-2.8" stroke="#2cc02c" stroke-width="0.8"/>
<line x1="-4.4" y1="-4.0" x2="4.4" y2="-3.0" stroke="#9a9a9a" stroke-width="1"/>
<line x1="-6.5" y1="-1.8" x2="6.5" y2="0.8" stroke="#2cc02c" stroke-width="0.8"/>
<line x1="-6.5" y1="1.8" x2="6.5" y2="4.2" stroke="#2cc02c" stroke-width="0.8"/>
<line x1="-4.5" y1="3.0" x2="4.5" y2="4.0" stroke="#9a9a9a" stroke-width="1"/>
<line x1="-6.3" y1="5.2" x2="6.3" y2="7.8" stroke="#2cc02c" stroke-width="0.8"/>
<line x1="-5.9" y1="8.8" x2="5.9" y2="11.2" stroke="#2cc02c" stroke-width="0.8"/>
<line x1="-4.1" y1="9.9" x2="4.1" y2="10.9" stroke="#9a9a9a" stroke-width="1"/>
<line x1="-5.3" y1="12.2" x2="5.3" y2="14.8" stroke="#2cc02c" stroke-width="0.8"/>
<line x1="-4.3" y1="15.8" x2="4.3" y2="18.2" stroke="#2cc02c" stroke-width="0.8"/>
<line x1="-3.0" y1="16.9" x2="3.0" y2="17.9" stroke="#9a9a9a" stroke-width="1"/>
<line x1="-2.6" y1="19.2" x2="2.6" y2="21.8" stroke="#2cc02c" stroke-width="0.8"/>
<ellipse cx="0" cy="0" rx="6.5" ry="21" fill="none" stroke="#26cc26" stroke-width="3"/>
<ellipse cx="0" cy="0" rx="7.1" ry="21.6" fill="none" stroke="#48f848" stroke-width="1.6" stroke-dasharray="1.6 2"/>
</g>
<g transform="translate(644,528) rotate(14)"><ellipse cx="0" cy="0" rx="26" ry="7" fill="#c4c4c4"/>
<line x1="-24.1" y1="-2.6" x2="-21.6" y2="2.6" stroke="#2cc02c" stroke-width="0.8"/>
<line x1="-22.9" y1="-1.8" x2="-21.9" y2="1.8" stroke="#9a9a9a" stroke-width="1"/>
<line x1="-20.4" y1="-4.3" x2="-17.9" y2="4.3" stroke="#2cc02c" stroke-width="0.8"/>
<line x1="-16.7" y1="-5.4" x2="-14.2" y2="5.4" stroke="#2cc02c" stroke-width="0.8"/>
<line x1="-15.5" y1="-3.8" x2="-14.5" y2="3.8" stroke="#9a9a9a" stroke-width="1"/>
<line x1="-13.0" y1="-6.1" x2="-10.5" y2="6.1" stroke="#2cc02c" stroke-width="0.8"/>
<line x1="-9.3" y1="-6.5" x2="-6.8" y2="6.5" stroke="#2cc02c" stroke-width="0.8"/>
<line x1="-8.1" y1="-4.6" x2="-7.1" y2="4.6" stroke="#9a9a9a" stroke-width="1"/>
<line x1="-5.6" y1="-6.8" x2="-3.1" y2="6.8" stroke="#2cc02c" stroke-width="0.8"/>
<line x1="-1.9" y1="-7.0" x2="0.6" y2="7.0" stroke="#2cc02c" stroke-width="0.8"/>
<line x1="-0.7" y1="-4.9" x2="0.3" y2="4.9" stroke="#9a9a9a" stroke-width="1"/>
<line x1="1.9" y1="-7.0" x2="4.4" y2="7.0" stroke="#2cc02c" stroke-width="0.8"/>
<line x1="5.6" y1="-6.8" x2="8.1" y2="6.8" stroke="#2cc02c" stroke-width="0.8"/>
<line x1="6.8" y1="-4.8" x2="7.8" y2="4.8" stroke="#9a9a9a" stroke-width="1"/>
<line x1="9.3" y1="-6.5" x2="11.8" y2="6.5" stroke="#2cc02c" stroke-width="0.8"/>
<line x1="13.0" y1="-6.1" x2="15.5" y2="6.1" stroke="#2cc02c" stroke-width="0.8"/>
<line x1="14.2" y1="-4.2" x2="15.2" y2="4.2" stroke="#9a9a9a" stroke-width="1"/>
<line x1="16.7" y1="-5.4" x2="19.2" y2="5.4" stroke="#2cc02c" stroke-width="0.8"/>
<line x1="20.4" y1="-4.3" x2="22.9" y2="4.3" stroke="#2cc02c" stroke-width="0.8"/>
<line x1="21.6" y1="-3.0" x2="22.6" y2="3.0" stroke="#9a9a9a" stroke-width="1"/>
<line x1="24.1" y1="-2.6" x2="26.6" y2="2.6" stroke="#2cc02c" stroke-width="0.8"/>
<ellipse cx="0" cy="0" rx="26" ry="7" fill="none" stroke="#26cc26" stroke-width="3"/>
<ellipse cx="0" cy="0" rx="26.6" ry="7.6" fill="none" stroke="#48f848" stroke-width="1.6" stroke-dasharray="1.6 2"/>
</g>
<g transform="translate(705,377) rotate(-25)"><ellipse cx="0" cy="0" rx="6.5" ry="19" fill="#c4c4c4"/>
<line x1="-2.8" y1="-17.1" x2="2.8" y2="-14.6" stroke="#2cc02c" stroke-width="0.8"/>
<line x1="-2.0" y1="-15.9" x2="2.0" y2="-14.9" stroke="#9a9a9a" stroke-width="1"/>
<line x1="-4.6" y1="-13.3" x2="4.6" y2="-10.8" stroke="#2cc02c" stroke-width="0.8"/>
<line x1="-5.6" y1="-9.5" x2="5.6" y2="-7.0" stroke="#2cc02c" stroke-width="0.8"/>
<line x1="-3.9" y1="-8.3" x2="3.9" y2="-7.3" stroke="#9a9a9a" stroke-width="1"/>
<line x1="-6.2" y1="-5.7" x2="6.2" y2="-3.2" stroke="#2cc02c" stroke-width="0.8"/>
<line x1="-6.5" y1="-1.9" x2="6.5" y2="0.6" stroke="#2cc02c" stroke-width="0.8"/>
<line x1="-4.5" y1="-0.7" x2="4.5" y2="0.3" stroke="#9a9a9a" stroke-width="1"/>
<line x1="-6.5" y1="1.9" x2="6.5" y2="4.4" stroke="#2cc02c" stroke-width="0.8"/>
<line x1="-6.2" y1="5.7" x2="6.2" y2="8.2" stroke="#2cc02c" stroke-width="0.8"/>
<line x1="-4.3" y1="6.9" x2="4.3" y2="7.9" stroke="#9a9a9a" stroke-width="1"/>
<line x1="-5.6" y1="9.5" x2="5.6" y2="12.0" stroke="#2cc02c" stroke-width="0.8"/>
<line x1="-4.6" y1="13.3" x2="4.6" y2="15.8" stroke="#2cc02c" stroke-width="0.8"/>
<line x1="-3.2" y1="14.5" x2="3.2" y2="15.5" stroke="#9a9a9a" stroke-width="1"/>
<line x1="-2.8" y1="17.1" x2="2.8" y2="19.6" stroke="#2cc02c" stroke-width="0.8"/>
<ellipse cx="0" cy="0" rx="6.5" ry="19" fill="none" stroke="#26cc26" stroke-width="3"/>
<ellipse cx="0" cy="0" rx="7.1" ry="19.6" fill="none" stroke="#48f848" stroke-width="1.6" stroke-dasharray="1.6 2"/>
</g>
<g transform="translate(776.5,349.5) rotate(-29)"><ellipse cx="0" cy="0" rx="6.5" ry="19.5" fill="#c4c4c4"/>
<line x1="-2.7" y1="-17.7" x2="2.7" y2="-15.2" stroke="#2cc02c" stroke-width="0.8"/>
<line x1="-1.9" y1="-16.5" x2="1.9" y2="-15.5" stroke="#9a9a9a" stroke-width="1"/>
<line x1="-4.5" y1="-14.2" x2="4.5" y2="-11.7" stroke="#2cc02c" stroke-width="0.8"/>
<line x1="-5.4" y1="-10.6" x2="5.4" y2="-8.1" stroke="#2cc02c" stroke-width="0.8"/>
<line x1="-3.8" y1="-9.4" x2="3.8" y2="-8.4" stroke="#9a9a9a" stroke-width="1"/>
<line x1="-6.1" y1="-7.1" x2="6.1" y2="-4.6" stroke="#2cc02c" stroke-width="0.8"/>
<line x1="-6.4" y1="-3.5" x2="6.4" y2="-1.0" stroke="#2cc02c" stroke-width="0.8"/>
<line x1="-4.5" y1="-2.3" x2="4.5" y2="-1.3" stroke="#9a9a9a" stroke-width="1"/>
<line x1="-6.5" y1="0.0" x2="6.5" y2="2.5" stroke="#2cc02c" stroke-width="0.8"/>
<line x1="-6.4" y1="3.5" x2="6.4" y2="6.0" stroke="#2cc02c" stroke-width="0.8"/>
<line x1="-4.5" y1="4.7" x2="4.5" y2="5.7" stroke="#9a9a9a" stroke-width="1"/>
<line x1="-6.1" y1="7.1" x2="6.1" y2="9.6" stroke="#2cc02c" stroke-width="0.8"/>
<line x1="-5.4" y1="10.6" x2="5.4" y2="13.1" stroke="#2cc02c" stroke-width="0.8"/>
<line x1="-3.8" y1="11.8" x2="3.8" y2="12.8" stroke="#9a9a9a" stroke-width="1"/>
<line x1="-4.5" y1="14.2" x2="4.5" y2="16.7" stroke="#2cc02c" stroke-width="0.8"/>
<line x1="-2.7" y1="17.7" x2="2.7" y2="20.2" stroke="#2cc02c" stroke-width="0.8"/>
<line x1="-1.9" y1="18.9" x2="1.9" y2="19.9" stroke="#9a9a9a" stroke-width="1"/>
<ellipse cx="0" cy="0" rx="6.5" ry="19.5" fill="none" stroke="#26cc26" stroke-width="3"/>
<ellipse cx="0" cy="0" rx="7.1" ry="20.1" fill="none" stroke="#48f848" stroke-width="1.6" stroke-dasharray="1.6 2"/>
</g>
<g transform="translate(830,372) rotate(20)"><ellipse cx="0" cy="0" rx="7" ry="24" fill="#c4c4c4"/>
<line x1="-2.7" y1="-22.2" x2="2.7" y2="-19.7" stroke="#2cc02c" stroke-width="0.8"/>
<line x1="-1.9" y1="-21.0" x2="1.9" y2="-20.0" stroke="#9a9a9a" stroke-width="1"/>
<line x1="-4.5" y1="-18.5" x2="4.5" y2="-16.0" stroke="#2cc02c" stroke-width="0.8"/>
<line x1="-5.5" y1="-14.8" x2="5.5" y2="-12.3" stroke="#2cc02c" stroke-width="0.8"/>
<line x1="-3.9" y1="-13.6" x2="3.9" y2="-12.6" stroke="#9a9a9a" stroke-width="1"/>
<line x1="-6.2" y1="-11.1" x2="6.2" y2="-8.6" stroke="#2cc02c" stroke-width="0.8"/>
<line x1="-6.7" y1="-7.4" x2="6.7" y2="-4.9" stroke="#2cc02c" stroke-width="0.8"/>
<line x1="-4.7" y1="-6.2" x2="4.7" y2="-5.2" stroke="#9a9a9a" stroke-width="1"/>
<line x1="-6.9" y1="-3.7" x2="6.9" y2="-1.2" stroke="#2cc02c" stroke-width="0.8"/>
<line x1="-7.0" y1="0.0" x2="7.0" y2="2.5" stroke="#2cc02c" stroke-width="0.8"/>
<line x1="-4.9" y1="1.2" x2="4.9" y2="2.2" stroke="#9a9a9a" stroke-width="1"/>
<line x1="-6.9" y1="3.7" x2="6.9" y2="6.2" stroke="#2cc02c" stroke-width="0.8"/>
<line x1="-6.7" y1="7.4" x2="6.7" y2="9.9" stroke="#2cc02c" stroke-width="0.8"/>
<line x1="-4.7" y1="8.6" x2="4.7" y2="9.6" stroke="#9a9a9a" stroke-width="1"/>
<line x1="-6.2" y1="11.1" x2="6.2" y2="13.6" stroke="#2cc02c" stroke-width="0.8"/>
<line x1="-5.5" y1="14.8" x2="5.5" y2="17.3" stroke="#2cc02c" stroke-width="0.8"/>
<line x1="-3.9" y1="16.0" x2="3.9" y2="17.0" stroke="#9a9a9a" stroke-width="1"/>
<line x1="-4.5" y1="18.5" x2="4.5" y2="21.0" stroke="#2cc02c" stroke-width="0.8"/>
<line x1="-2.7" y1="22.2" x2="2.7" y2="24.7" stroke="#2cc02c" stroke-width="0.8"/>
<line x1="-1.9" y1="23.4" x2="1.9" y2="24.4" stroke="#9a9a9a" stroke-width="1"/>
<ellipse cx="0" cy="0" rx="7" ry="24" fill="none" stroke="#26cc26" stroke-width="3"/>
<ellipse cx="0" cy="0" rx="7.6" ry="24.6" fill="none" stroke="#48f848" stroke-width="1.6" stroke-dasharray="1.6 2"/>
</g>
<g transform="translate(768,516) rotate(-28)"><ellipse cx="0" cy="0" rx="6.5" ry="19" fill="#c4c4c4"/>
<line x1="-2.8" y1="-17.1" x2="2.8" y2="-14.6" stroke="#2cc02c" stroke-width="0.8"/>
<line x1="-2.0" y1="-15.9" x2="2.0" y2="-14.9" stroke="#9a9a9a" stroke-width="1"/>
<line x1="-4.6" y1="-13.3" x2="4.6" y2="-10.8" stroke="#2cc02c" stroke-width="0.8"/>
<line x1="-5.6" y1="-9.5" x2="5.6" y2="-7.0" stroke="#2cc02c" stroke-width="0.8"/>
<line x1="-3.9" y1="-8.3" x2="3.9" y2="-7.3" stroke="#9a9a9a" stroke-width="1"/>
<line x1="-6.2" y1="-5.7" x2="6.2" y2="-3.2" stroke="#2cc02c" stroke-width="0.8"/>
<line x1="-6.5" y1="-1.9" x2="6.5" y2="0.6" stroke="#2cc02c" stroke-width="0.8"/>
<line x1="-4.5" y1="-0.7" x2="4.5" y2="0.3" stroke="#9a9a9a" stroke-width="1"/>
<line x1="-6.5" y1="1.9" x2="6.5" y2="4.4" stroke="#2cc02c" stroke-width="0.8"/>
<line x1="-6.2" y1="5.7" x2="6.2" y2="8.2" stroke="#2cc02c" stroke-width="0.8"/>
<line x1="-4.3" y1="6.9" x2="4.3" y2="7.9" stroke="#9a9a9a" stroke-width="1"/>
<line x1="-5.6" y1="9.5" x2="5.6" y2="12.0" stroke="#2cc02c" stroke-width="0.8"/>
<line x1="-4.6" y1="13.3" x2="4.6" y2="15.8" stroke="#2cc02c" stroke-width="0.8"/>
<line x1="-3.2" y1="14.5" x2="3.2" y2="15.5" stroke="#9a9a9a" stroke-width="1"/>
<line x1="-2.8" y1="17.1" x2="2.8" y2="19.6" stroke="#2cc02c" stroke-width="0.8"/>
<ellipse cx="0" cy="0" rx="6.5" ry="19" fill="none" stroke="#26cc26" stroke-width="3"/>
<ellipse cx="0" cy="0" rx="7.1" ry="19.6" fill="none" stroke="#48f848" stroke-width="1.6" stroke-dasharray="1.6 2"/>
</g>
<g transform="translate(839,489.5) rotate(-28)"><ellipse cx="0" cy="0" rx="6.5" ry="19.5" fill="#c4c4c4"/>
<line x1="-2.7" y1="-17.7" x2="2.7" y2="-15.2" stroke="#2cc02c" stroke-width="0.8"/>
<line x1="-1.9" y1="-16.5" x2="1.9" y2="-15.5" stroke="#9a9a9a" stroke-width="1"/>
<line x1="-4.5" y1="-14.2" x2="4.5" y2="-11.7" stroke="#2cc02c" stroke-width="0.8"/>
<line x1="-5.4" y1="-10.6" x2="5.4" y2="-8.1" stroke="#2cc02c" stroke-width="0.8"/>
<line x1="-3.8" y1="-9.4" x2="3.8" y2="-8.4" stroke="#9a9a9a" stroke-width="1"/>
<line x1="-6.1" y1="-7.1" x2="6.1" y2="-4.6" stroke="#2cc02c" stroke-width="0.8"/>
<line x1="-6.4" y1="-3.5" x2="6.4" y2="-1.0" stroke="#2cc02c" stroke-width="0.8"/>
<line x1="-4.5" y1="-2.3" x2="4.5" y2="-1.3" stroke="#9a9a9a" stroke-width="1"/>
<line x1="-6.5" y1="0.0" x2="6.5" y2="2.5" stroke="#2cc02c" stroke-width="0.8"/>
<line x1="-6.4" y1="3.5" x2="6.4" y2="6.0" stroke="#2cc02c" stroke-width="0.8"/>
<line x1="-4.5" y1="4.7" x2="4.5" y2="5.7" stroke="#9a9a9a" stroke-width="1"/>
<line x1="-6.1" y1="7.1" x2="6.1" y2="9.6" stroke="#2cc02c" stroke-width="0.8"/>
<line x1="-5.4" y1="10.6" x2="5.4" y2="13.1" stroke="#2cc02c" stroke-width="0.8"/>
<line x1="-3.8" y1="11.8" x2="3.8" y2="12.8" stroke="#9a9a9a" stroke-width="1"/>
<line x1="-4.5" y1="14.2" x2="4.5" y2="16.7" stroke="#2cc02c" stroke-width="0.8"/>
<line x1="-2.7" y1="17.7" x2="2.7" y2="20.2" stroke="#2cc02c" stroke-width="0.8"/>
<line x1="-1.9" y1="18.9" x2="1.9" y2="19.9" stroke="#9a9a9a" stroke-width="1"/>
<ellipse cx="0" cy="0" rx="6.5" ry="19.5" fill="none" stroke="#26cc26" stroke-width="3"/>
<ellipse cx="0" cy="0" rx="7.1" ry="20.1" fill="none" stroke="#48f848" stroke-width="1.6" stroke-dasharray="1.6 2"/>
</g>
</g>
<rect x="489.4" y="548.5" width="4" height="4" fill="#3cf83c"/>
<rect x="538.6" y="393.0" width="4" height="4" fill="#3cf83c"/>
<rect x="567.0" y="404.0" width="4" height="4" fill="#3cf83c"/>
<rect x="532.1" y="412.5" width="4" height="4" fill="#3cf83c"/>
<rect x="526.7" y="531.8" width="4" height="4" fill="#3cf83c"/>
<rect x="673.1" y="362.9" width="4" height="4" fill="#3cf83c"/>
<rect x="662.8" y="340.0" width="4" height="4" fill="#3cf83c"/>
<rect x="645.4" y="349.0" width="4" height="4" fill="#3cf83c"/>
<rect x="601.0" y="448.2" width="4" height="4" fill="#3cf83c"/>
<rect x="633.0" y="491.2" width="4" height="4" fill="#3cf83c"/>
<rect x="648.4" y="583.8" width="4" height="4" fill="#3cf83c"/>
<rect x="639.0" y="613.2" width="4" height="4" fill="#3cf83c"/>
<rect x="619.3" y="604.8" width="4" height="4" fill="#3cf83c"/>
<rect x="773.9" y="296.3" width="4" height="4" fill="#3cf83c"/>
<rect x="784.7" y="319.8" width="4" height="4" fill="#3cf83c"/>
<rect x="852.8" y="270.2" width="4" height="4" fill="#3cf83c"/>
<rect x="881.4" y="283.1" width="4" height="4" fill="#3cf83c"/>
<rect x="841.6" y="408.1" width="4" height="4" fill="#3cf83c"/>
<rect x="962.4" y="462.8" width="4" height="4" fill="#3cf83c"/>
<rect x="953.6" y="491.4" width="4" height="4" fill="#3cf83c"/>
<rect x="866.4" y="498.7" width="4" height="4" fill="#3cf83c"/>
<rect x="876.1" y="522.9" width="4" height="4" fill="#3cf83c"/>
<rect x="852.6" y="454.0" width="4" height="4" fill="#3cf83c"/>
<rect x="754.0" y="540.8" width="4" height="4" fill="#3cf83c"/>
<rect x="765.7" y="565.6" width="4" height="4" fill="#3cf83c"/>
<rect x="748.0" y="573.0" width="4" height="4" fill="#3cf83c"/>
<rect x="770.1" y="430.4" width="4" height="4" fill="#3cf83c"/>
<g transform="translate(22,52) scale(1.0)" shape-rendering="geometricPrecision"><defs><linearGradient id="pg" x1="0" y1="0" x2="1" y2="1"><stop offset="0" stop-color="#fafafa"/><stop offset="1" stop-color="#dcdcdc"/></linearGradient><radialGradient id="glow"><stop offset="0" stop-color="#ffffe0"/><stop offset="0.4" stop-color="#f8f020"/><stop offset="1" stop-color="#f8f020" stop-opacity="0"/></radialGradient></defs><rect x="1.5" y="0.5" width="17" height="21" fill="url(#pg)" stroke="#9a9a98" stroke-width="1"/><circle cx="15" cy="4.5" r="5" fill="url(#glow)"/></g>
<g transform="translate(56,52) scale(1.0)" shape-rendering="geometricPrecision"><polygon points="2,3 4,1 22,1 22,12 2,19" fill="#8c8c8a" stroke="#6a6a68" stroke-width="0.8"/><rect x="6" y="0.5" width="16" height="10" fill="#e4e4e2" stroke="#9a9a98" stroke-width="0.6"/><polygon points="6,8.5 24,8.5 21,19 2.5,19" fill="#6a9ad8" stroke="#3a6aa8" stroke-width="0.8"/></g>
<g transform="translate(92,52) scale(1.0)" shape-rendering="geometricPrecision"><polygon points="1.5,12.6 6,5.5 18.5,5.5 23,12.6" fill="#e6e6e4" stroke="#9a9a98" stroke-width="0.7"/><polygon points="4,12.6 7.5,7.5 17,7.5 20.5,12.6" fill="#cfcfcd"/><rect x="1.5" y="12.6" width="21.5" height="9" rx="1" fill="#bdbdbb" stroke="#8a8a88" stroke-width="0.8"/><rect x="3" y="16" width="18" height="2" fill="#9c9c9a"/><path d="M3.5,8.5 C3.5,2 9,0.5 12.5,4.5 L12.5,7" fill="none" stroke="#2f6fc0" stroke-width="3"/><polygon points="7,6.5 18,6.5 12.5,13.5" fill="#2f6fc0" stroke="#1d4a8a" stroke-width="0.5"/></g>
<g transform="translate(128,53) scale(1.0)" shape-rendering="geometricPrecision"><rect x="5" y="0.5" width="13" height="11" fill="#e8e8e6" stroke="#b0b0ae" stroke-width="0.6"/><polygon points="11.5,2 15,6 13,6 13,9 10,9 10,6 8,6" fill="#8a8a88"/><rect x="0.5" y="9" width="22" height="11" rx="3" fill="#d8d8d6" stroke="#9a9a98" stroke-width="0.8"/><rect x="3" y="12" width="17" height="4" fill="#f4f4f2"/></g>
<rect x="163" y="51" width="1" height="24" fill="#8a8884" />
<rect x="164" y="51" width="1" height="24" fill="#ffffff" />
<g transform="translate(176,52) scale(1.0)" shape-rendering="geometricPrecision"><path d="M5,0.5 L12.5,13 M17,0.5 L9.5,13" stroke="#8a8a88" stroke-width="3.2" fill="none"/><path d="M5,0.5 L12.5,13 M17,0.5 L9.5,13" stroke="#d4d4d2" stroke-width="1.8" fill="none"/><ellipse cx="5.5" cy="17.8" rx="3.6" ry="4.6" fill="none" stroke="#8c8c8a" stroke-width="2.4" transform="rotate(50 5.5 17.8)"/><ellipse cx="16.5" cy="17.8" rx="3.6" ry="4.6" fill="none" stroke="#8c8c8a" stroke-width="2.4" transform="rotate(-50 16.5 17.8)"/></g>
<g transform="translate(211,52) scale(1.0)" shape-rendering="geometricPrecision"><rect x="0.5" y="0.5" width="13" height="16" fill="#ecece8" stroke="#b8b8b4" stroke-width="0.6"/><path d="M2,4h9M2,6h9M2,8h9M2,10h9" stroke="#c0c0bc" stroke-width="0.6"/><polygon points="7,5 22,5 22,19 19,22 7,22" fill="#f2f2ee" stroke="#b0b0ac" stroke-width="0.6"/><rect x="9.5" y="8" width="10" height="8" fill="#dcdcd8"/><polygon points="19,22 22,19 19,19" fill="#a8a8a4"/></g>
<rect x="248" y="53" width="4" height="21" fill="#8c8a86" />
<g transform="translate(511,55) scale(1.0)" shape-rendering="geometricPrecision"><polygon points="1,3.5 8,1.2 15,2.8 8.8,5" fill="#9cc0ea" stroke="#1d3b6b" stroke-width="0.7"/><polygon points="1,3.5 8.8,5 8.8,15 1,13" fill="#4f8ad2" stroke="#1d3b6b" stroke-width="0.7"/><polygon points="8.8,5 15,2.8 15,12.6 8.8,15" fill="#2d5ea6" stroke="#1d3b6b" stroke-width="0.7"/></g>
<g transform="translate(707,51.7) scale(1.0)" shape-rendering="geometricPrecision"><defs><radialGradient id="rec" cx="0.4" cy="0.35" r="0.7"><stop offset="0" stop-color="#f03030"/><stop offset="1" stop-color="#b00808"/></radialGradient></defs><circle cx="11" cy="11" r="10.8" fill="url(#rec)" stroke="#700808" stroke-width="0.8"/></g>
<g transform="translate(743,51.7) scale(1.0)" shape-rendering="geometricPrecision"><rect x="0.5" y="0.5" width="21.5" height="21.5" fill="#bebdb9" stroke="#9a9995" stroke-width="0.9"/></g>
<g transform="translate(779,52.3) scale(1.0)" shape-rendering="geometricPrecision"><rect x="1" y="2.5" width="20" height="18" fill="#f0f0ee" stroke="#9a9a98" stroke-width="0.8"/><rect x="1.5" y="0.5" width="19" height="3" fill="#c8a020"/><path d="M4,7h12M4,10h12M4,13h9" stroke="#b8b8b6" stroke-width="0.8"/><polygon points="6,15.5 18,7 20.5,9.5 8.5,17.5 5.5,17.5" fill="#e0a030" stroke="#7a5a10" stroke-width="0.5"/><circle cx="20" cy="8" r="1.4" fill="#d83030"/></g>
<g transform="translate(814,52) scale(1.0)" shape-rendering="geometricPrecision"><polygon points="0.5,0.5 22.5,11 0.5,21.5" fill="#c0bfbb" stroke="#9a9995" stroke-width="0.9"/></g>
<g transform="translate(866,52.5) scale(1.0)" shape-rendering="geometricPrecision"><polygon points="1,11.5 9.5,8.5 18.5,12 10,15" fill="#f8ec80" stroke="#4a4010" stroke-width="0.8"/><polygon points="1,11.5 10,15 10,21 1,17.5" fill="#f0dc30" stroke="#4a4010" stroke-width="0.8"/><polygon points="10,15 18.5,12 18.5,17.5 10,21" fill="#d4bc00" stroke="#4a4010" stroke-width="0.8"/><polygon points="1,4.5 5.5,2.5 10.5,4.5 6,6.5" fill="#f8ec80" stroke="#4a4010" stroke-width="0.8"/><polygon points="1,4.5 6,6.5 6,13.2 1,11.5" fill="#f0dc30" stroke="#4a4010" stroke-width="0.8"/><polygon points="6,6.5 10.5,4.5 10.5,11.2 6,13.2" fill="#d4bc00" stroke="#4a4010" stroke-width="0.8"/><path d="M3,15 L7,16.5 M3,8 L5,9" stroke="#c8b000" stroke-width="0.8"/></g>
<g transform="translate(900,53.2) scale(1.0)" shape-rendering="geometricPrecision"><polygon points="0.5,2 6,2 7.5,4 20,4 20,15 0.5,15" fill="#8a8a88"/><rect x="0.5" y="5.5" width="20.5" height="12" fill="#6c9cd8" stroke="#4a78b0" stroke-width="0.6"/></g>
<g transform="translate(949,52) scale(1.4)" shape-rendering="geometricPrecision"><polygon points="1,10 9,7.5 15,9 15,13 7,15.5 1,14" fill="#3f78c4" stroke="#1d3b6b" stroke-width="0.6"/><polygon points="1,10 9,7.5 15,9 7,11.5" fill="#6fa0dc"/><polygon points="5,6 8.5,1 12,6 10,6 10,10 7,10 7,6" fill="#4a86d0" stroke="#1d3b6b" stroke-width="0.6"/></g>
<g transform="translate(984.5,51.5) scale(1.4)" shape-rendering="geometricPrecision"><path d="M7.36,15.27 A7.3,7.3 0 0 1 7.36,0.73 L7.72,4.81 A3.2,3.2 0 0 0 7.72,11.19 Z" fill="#4a80c8" stroke="#1d3b6b" stroke-width="0.6"/><path d="M13.59,12.69 A7.3,7.3 0 0 1 7.75,15.30 L7.89,11.20 A3.2,3.2 0 0 0 10.45,10.06 Z" fill="#6fa0dc" stroke="#1d3b6b" stroke-width="0.6"/><path d="M10.33,1.61 A6.8,6.8 0 0 1 13.89,11.40 L11.64,10.10 A4.2,4.2 0 0 0 9.44,4.05 Z" fill="#6a9cd8" stroke="#1d3b6b" stroke-width="0.6"/><polygon points="8.8,0.8 14,2.5 11,5.5" fill="#6a9cd8" stroke="#1d3b6b" stroke-width="0.5"/><circle cx="8" cy="8" r="1.3" fill="#4a80c8" stroke="#1d3b6b" stroke-width="0.5"/></g>
<g transform="translate(1020,52) scale(1.4)" shape-rendering="geometricPrecision"><polygon points="1.5,4 6,2 6,12 1.5,14" fill="#2c5ea6" stroke="#1d3b6b" stroke-width="0.6"/><polygon points="10,2 14.5,4 14.5,14 10,12" fill="#6a9cd8" stroke="#1d3b6b" stroke-width="0.6"/><rect x="7.2" y="0.5" width="1.6" height="3" rx="0.8" fill="#c81010"/><rect x="7.2" y="6.5" width="1.6" height="3" rx="0.8" fill="#c81010"/><rect x="7.2" y="12.5" width="1.6" height="3" rx="0.8" fill="#c81010"/></g>
<g transform="translate(1056.5,52) scale(1.4)" shape-rendering="geometricPrecision"><path d="M1,11 C1,6 3,3.5 8,2 L15,3.5 C11,5 9,7 8,12 Z" fill="#5590d4" stroke="#1d3b6b" stroke-width="0.6"/><polygon points="1,11 8,12 8,15 1,14" fill="#3a70b8" stroke="#1d3b6b" stroke-width="0.6"/></g>
<g transform="translate(1092.5,52) scale(1.4)" shape-rendering="geometricPrecision"><polygon points="1,10 7,3 15,4 9,11.5" fill="#5590d4" stroke="#1d3b6b" stroke-width="0.6"/><polygon points="1,10 9,11.5 9,15 1,13" fill="#3a70b8" stroke="#1d3b6b" stroke-width="0.6"/></g>
<g transform="translate(1129.5,52) scale(1.4)" shape-rendering="geometricPrecision"><polygon points="2,4 14,1.2 14,11.5 2,14.5" fill="#5590d4" stroke="#1d3b6b" stroke-width="0.5"/><rect x="1" y="3.5" width="1.8" height="11.5" fill="#d81010"/><rect x="13.2" y="0.5" width="1.8" height="11.5" fill="#d81010"/></g>
<g transform="translate(20.5,92.5) scale(1.4)" shape-rendering="geometricPrecision"><polygon points="1,3.5 8,1.2 15,2.8 8.8,5" fill="#f7ea80" stroke="#5a4c10" stroke-width="0.7"/><polygon points="1,3.5 8.8,5 8.8,15 1,13" fill="#f1da25" stroke="#5a4c10" stroke-width="0.7"/><polygon points="8.8,5 15,2.8 15,12.6 8.8,15" fill="#cbb000" stroke="#5a4c10" stroke-width="0.7"/></g>
<g transform="translate(58,92.5) scale(1.0)" shape-rendering="geometricPrecision"><defs><linearGradient id="cyl" x1="0" x2="1"><stop offset="0" stop-color="#dcc820"/><stop offset="0.4" stop-color="#f6e660"/><stop offset="1" stop-color="#c8a800"/></linearGradient></defs><path d="M0.5,3.5 L0.5,17.5 A9,3 0 0 0 18.5,17.5 L18.5,3.5 Z" fill="url(#cyl)" stroke="#5a4c10" stroke-width="0.8"/><ellipse cx="9.5" cy="3.5" rx="9" ry="3" fill="#f2e050" stroke="#5a4c10" stroke-width="0.8"/></g>
<g transform="translate(92.8,91.7) scale(1.0)" shape-rendering="geometricPrecision"><defs><radialGradient id="sph" cx="0.35" cy="0.3" r="0.75"><stop offset="0" stop-color="#f6e670"/><stop offset="1" stop-color="#c8a400"/></radialGradient></defs><circle cx="11" cy="11" r="10.5" fill="url(#sph)" stroke="#5a4c10" stroke-width="0.8"/></g>
<g transform="translate(132,92) scale(1.0)" shape-rendering="geometricPrecision"><path d="M8,0.5 L15.5,18 A7.5,2.5 0 0 1 0.5,18 Z" fill="#e8cc20" stroke="#5a4c10" stroke-width="0.8"/></g>
<g transform="translate(165,96) scale(1.0)" shape-rendering="geometricPrecision"><ellipse cx="11" cy="8" rx="10.8" ry="7.6" fill="#ecd428" stroke="#5a4c10" stroke-width="0.8"/><ellipse cx="11" cy="7.5" rx="5.6" ry="2.6" fill="#dcdad5" stroke="#5a4c10" stroke-width="0.8"/></g>
<g transform="translate(200,92) scale(1.45)" shape-rendering="geometricPrecision"><polygon points="3,0.5 6.5,7.5 0.5,7.5" fill="#f0d820" stroke="#5a4c10" stroke-width="0.5"/><rect x="5.5" y="2" width="9.5" height="2" fill="#9a9c9a" stroke="#666" stroke-width="0.4"/><rect x="5" y="5.5" width="9" height="8" fill="#f0d820" stroke="#5a4c10" stroke-width="0.5"/><circle cx="4.2" cy="11" r="3.8" fill="#e8cc10" stroke="#7c7e7c" stroke-width="1.2"/><circle cx="4.2" cy="11" r="1.8" fill="none" stroke="#7c7e7c" stroke-width="0.8"/><circle cx="11.8" cy="11" r="3.8" fill="#e0c000" stroke="#7c7e7c" stroke-width="1.2"/></g>
<g transform="translate(235,92) scale(1.4)" shape-rendering="geometricPrecision"><g transform="translate(0.5,7.5) scale(0.62)"><polygon points="1,3.5 8,1.2 15,2.8 8.8,5" fill="#f7ea80" stroke="#5a4c10" stroke-width="0.7"/><polygon points="1,3.5 8.8,5 8.8,15 1,13" fill="#f1da25" stroke="#5a4c10" stroke-width="0.7"/><polygon points="8.8,5 15,2.8 15,12.6 8.8,15" fill="#cbb000" stroke="#5a4c10" stroke-width="0.7"/></g><polygon points="1.5,5 3.5,3 5.5,5 3.5,7" fill="none" stroke="#777" stroke-width="0.8"/><circle cx="7.5" cy="2.8" r="1.8" fill="#e01010"/><rect x="10.5" y="0.3" width="5" height="1.3" fill="#666"/><circle cx="13" cy="4.2" r="1.8" fill="#e01010"/><rect x="11" y="6.8" width="4" height="4.2" fill="#b8b8b8" stroke="#666" stroke-width="0.5"/><circle cx="12.8" cy="13.5" r="1.8" fill="#e01010"/></g>
<g shape-rendering="geometricPrecision">
<g transform="translate(31,221) scale(0.93)" shape-rendering="geometricPrecision"><rect x="0.5" y="0.5" width="14" height="15" fill="#f4f4f4" stroke="#7a7a7a" stroke-width="0.8"/><g transform="translate(2,4) scale(0.65)"><polygon points="1,3.5 8,1.2 15,2.8 8.8,5" fill="#9cc0ea" stroke="#1d3b6b" stroke-width="0.7"/><polygon points="1,3.5 8.8,5 8.8,15 1,13" fill="#4f8ad2" stroke="#1d3b6b" stroke-width="0.7"/><polygon points="8.8,5 15,2.8 15,12.6 8.8,15" fill="#2d5ea6" stroke="#1d3b6b" stroke-width="0.7"/></g><circle cx="10" cy="4.5" r="3" fill="#e01818" stroke="#801010" stroke-width="0.4"/></g>
<g transform="translate(50.5,238.5) scale(0.95)" shape-rendering="geometricPrecision"><ellipse cx="8" cy="14.5" rx="6" ry="1.5" fill="#c8c8c8" opacity="0.7"/><path d="M1,6 C2,2 4,1.5 5,1.5 L6.5,6 L9.5,10 L11,3 L13,1 C14.5,4 15,8 15,11 L13,13 L11,8 L9,13.5 L6,9 L4.5,6.5 L3,13 L1,12 Z" fill="#78d040" stroke="#3a8a18" stroke-width="0.6"/><path d="M5,1.5 L4.5,6.5 M11,3 L11,8" stroke="#a8e878" stroke-width="0.9"/></g>
<g transform="translate(50.5,256.5) scale(0.95)" shape-rendering="geometricPrecision"><polygon points="1,3.5 8,1.2 15,2.8 8.8,5" fill="#9cc0ea" stroke="#1d3b6b" stroke-width="0.7"/><polygon points="1,3.5 8.8,5 8.8,15 1,13" fill="#4f8ad2" stroke="#1d3b6b" stroke-width="0.7"/><polygon points="8.8,5 15,2.8 15,12.6 8.8,15" fill="#2d5ea6" stroke="#1d3b6b" stroke-width="0.7"/></g>
<g transform="translate(50.5,274.5) scale(0.95)" shape-rendering="geometricPrecision"><polygon points="1,3.5 8,1.2 15,2.8 8.8,5" fill="#9cc0ea" stroke="#1d3b6b" stroke-width="0.7"/><polygon points="1,3.5 8.8,5 8.8,15 1,13" fill="#4f8ad2" stroke="#1d3b6b" stroke-width="0.7"/><polygon points="8.8,5 15,2.8 15,12.6 8.8,15" fill="#2d5ea6" stroke="#1d3b6b" stroke-width="0.7"/><path d="M10.5,4 L12.3,6.2 L15.5,0.8" fill="none" stroke="#ffffff" stroke-width="3.2"/><path d="M10.5,4 L12.3,6.2 L15.5,0.8" fill="none" stroke="#1030f0" stroke-width="1.8"/></g>
</g>
<rect x="252" y="41" width="232" height="614" fill="#000" />
<rect x="253" y="42" width="230" height="612" fill="#ffffff" />
<rect x="254" y="43" width="229" height="611" fill="#a8a49c" />
<rect x="254" y="43" width="228" height="610" fill="#dcdad5" />
<text x="278.92" y="56.5" textLength="87.66" lengthAdjust="spacingAndGlyphs" fill="#000">Import CAD...</text>
<g transform="translate(259,44) scale(1.0)" shape-rendering="geometricPrecision"><polygon points="3,3 9,0.8 15,8 13.5,12 8,14.5 3.5,9" fill="#f4f4f2" stroke="#8a8a88" stroke-width="0.7"/><polygon points="1,9.5 5,9.5 5,7.8 8,10.8 5,13.8 5,12 1,12" fill="#5cc02c" stroke="#444" stroke-width="0.4"/></g>
<text x="278.92" y="75.5" textLength="87.07" lengthAdjust="spacingAndGlyphs" fill="#000">Export CAD...</text>
<g transform="translate(259,63) scale(1.0)" shape-rendering="geometricPrecision"><polygon points="3,3 9,0.8 15,8 13.5,12 8,14.5 3.5,9" fill="#f4f4f2" stroke="#8a8a88" stroke-width="0.7"/><polygon points="8,9.5 4,9.5 4,7.8 1,10.8 4,13.8 4,12 8,12" fill="#d81818" stroke="#444" stroke-width="0.4"/></g>
<rect x="259" y="84" width="218" height="1" fill="#a8a49c" />
<rect x="259" y="85" width="218" height="1" fill="#ffffff" />
<text x="278.92" y="102.5" textLength="64.02" lengthAdjust="spacingAndGlyphs" fill="#000">Primitives</text>
<polygon points="470,92 476,97.5 470,103" fill="#000" shape-rendering="geometricPrecision"/>
<text x="279.47" y="121.5" textLength="124.39" lengthAdjust="spacingAndGlyphs" fill="#000">Create primitives...</text>
<g transform="translate(259,109) scale(1.0)" shape-rendering="geometricPrecision"><polygon points="3,0.5 6.5,7.5 0.5,7.5" fill="#f0d820" stroke="#5a4c10" stroke-width="0.5"/><rect x="5.5" y="2" width="9.5" height="2" fill="#9a9c9a" stroke="#666" stroke-width="0.4"/><rect x="5" y="5.5" width="9" height="8" fill="#f0d820" stroke="#5a4c10" stroke-width="0.5"/><circle cx="4.2" cy="11" r="3.8" fill="#e8cc10" stroke="#7c7e7c" stroke-width="1.2"/><circle cx="4.2" cy="11" r="1.8" fill="none" stroke="#7c7e7c" stroke-width="0.8"/><circle cx="11.8" cy="11" r="3.8" fill="#e0c000" stroke="#7c7e7c" stroke-width="1.2"/></g>
<text x="279.34" y="140.5" textLength="101.35" lengthAdjust="spacingAndGlyphs" fill="#000">Shape builder...</text>
<g transform="translate(259,128) scale(1.0)" shape-rendering="geometricPrecision"><g transform="translate(0.5,7.5) scale(0.62)"><polygon points="1,3.5 8,1.2 15,2.8 8.8,5" fill="#f7ea80" stroke="#5a4c10" stroke-width="0.7"/><polygon points="1,3.5 8.8,5 8.8,15 1,13" fill="#f1da25" stroke="#5a4c10" stroke-width="0.7"/><polygon points="8.8,5 15,2.8 15,12.6 8.8,15" fill="#cbb000" stroke="#5a4c10" stroke-width="0.7"/></g><polygon points="1.5,5 3.5,3 5.5,5 3.5,7" fill="none" stroke="#777" stroke-width="0.8"/><circle cx="7.5" cy="2.8" r="1.8" fill="#e01010"/><rect x="10.5" y="0.3" width="5" height="1.3" fill="#666"/><circle cx="13" cy="4.2" r="1.8" fill="#e01010"/><rect x="11" y="6.8" width="4" height="4.2" fill="#b8b8b8" stroke="#666" stroke-width="0.5"/><circle cx="12.8" cy="13.5" r="1.8" fill="#e01010"/></g>
<rect x="259" y="149" width="218" height="1" fill="#a8a49c" />
<rect x="259" y="150" width="218" height="1" fill="#ffffff" />
<text x="279.47" y="167.5" textLength="173.15" lengthAdjust="spacingAndGlyphs" fill="#8f8d89">Create shape from mesh...</text>
<g transform="translate(259,155) scale(1.0)" shape-rendering="geometricPrecision"><circle cx="5" cy="5" r="4" fill="#c4c4c2" stroke="#8a8a88" stroke-width="0.8"/><polygon points="3,11 6,9.5 8,11 6,13.5" fill="#bcbcba" stroke="#8a8a88" stroke-width="0.7"/><polygon points="8.5,7 12,5.5 15.5,7 15.5,14 12,15.5 8.5,14" fill="#bdbdbb" stroke="#8a8a88" stroke-width="0.7"/></g>
<rect x="254" y="173" width="228" height="19" fill="#000" />
<rect x="254" y="173" width="227" height="18" fill="#4a6a88" />
<rect x="254" y="173" width="227" height="1" fill="#5f8bb3" />
<text x="279.47" y="186.5" textLength="102.92" lengthAdjust="spacingAndGlyphs" fill="#ffffff">Convert to solid</text>
<text x="278.92" y="205.5" textLength="102.39" lengthAdjust="spacingAndGlyphs" fill="#000">Reverse shapes</text>
<text x="279.47" y="224.5" textLength="125.42" lengthAdjust="spacingAndGlyphs" fill="#000">Create simple copy</text>
<g transform="translate(259,212) scale(1.0)" shape-rendering="geometricPrecision"><polygon points="1,3.5 8,1.2 15,2.8 8.8,5" fill="#9cc0ea" stroke="#1d3b6b" stroke-width="0.7"/><polygon points="1,3.5 8.8,5 8.8,15 1,13" fill="#4f8ad2" stroke="#1d3b6b" stroke-width="0.7"/><polygon points="8.8,5 15,2.8 15,12.6 8.8,15" fill="#2d5ea6" stroke="#1d3b6b" stroke-width="0.7"/></g>
<text x="278.92" y="243.5" textLength="84.23" lengthAdjust="spacingAndGlyphs" fill="#000">Refine shape</text>
<g transform="translate(259,231) scale(1.0)" shape-rendering="geometricPrecision"><polygon points="1.5,6.5 6,2 4,1.5 8.5,1 8,5.5 7,4 3,8" fill="#4a80c8" stroke="#1d3b6b" stroke-width="0.5"/><path d="M9,7 C9,3 15,2 15,5.5 C15,8 12,8.5 11,9 L9,9 Z" fill="#4a80c8" stroke="#1d3b6b" stroke-width="0.5"/><path d="M1.5,15 L1.5,10.5 C3,8 8,8 8.5,11 C8.5,13 6,14 5,15 Z" fill="#4a80c8" stroke="#1d3b6b" stroke-width="0.5"/></g>
<text x="279.47" y="262.5" textLength="108.95" lengthAdjust="spacingAndGlyphs" fill="#000">Check Geometry</text>
<g transform="translate(259,250) scale(1.0)" shape-rendering="geometricPrecision"><polygon points="8,4 12.5,13 13,15 3,15 3.5,13" fill="#4a80c8" stroke="#1d3b6b" stroke-width="0.6"/><circle cx="8" cy="4.5" r="3.2" fill="#dce8f4" stroke="#666" stroke-width="0.8"/><rect x="10.5" y="6.5" width="2" height="3" fill="#e09020" transform="rotate(-40 11.5 8)"/></g>
<rect x="259" y="271" width="218" height="1" fill="#a8a49c" />
<rect x="259" y="272" width="218" height="1" fill="#ffffff" />
<text x="278.92" y="289.5" textLength="52.64" lengthAdjust="spacingAndGlyphs" fill="#000">Boolean</text>
<polygon points="470,279 476,284.5 470,290" fill="#000" shape-rendering="geometricPrecision"/>
<text x="279.00" y="308.5" textLength="23.64" lengthAdjust="spacingAndGlyphs" fill="#000">Join</text>
<polygon points="470,298 476,303.5 470,309" fill="#000" shape-rendering="geometricPrecision"/>
<text x="279.34" y="327.5" textLength="28.82" lengthAdjust="spacingAndGlyphs" fill="#000">Split</text>
<polygon points="470,317 476,322.5 470,328" fill="#000" shape-rendering="geometricPrecision"/>
<text x="279.47" y="346.5" textLength="70.63" lengthAdjust="spacingAndGlyphs" fill="#000">Compound</text>
<polygon points="470,336 476,341.5 470,347" fill="#000" shape-rendering="geometricPrecision"/>
<rect x="259" y="355" width="218" height="1" fill="#a8a49c" />
<rect x="259" y="356" width="218" height="1" fill="#ffffff" />
<text x="279.34" y="373.5" textLength="48.30" lengthAdjust="spacingAndGlyphs" fill="#8f8d89">Section</text>
<g transform="translate(259,361) scale(1.0)" shape-rendering="geometricPrecision"><rect x="2" y="2" width="11" height="12" fill="#b8b8b6" stroke="#9a9a98" stroke-width="0.8"/><rect x="5" y="5" width="5" height="5" fill="#c8c8c6" stroke="#a0a09e" stroke-width="0.6"/></g>
<text x="279.47" y="392.5" textLength="106.32" lengthAdjust="spacingAndGlyphs" fill="#000">Cross-sections...</text>
<g transform="translate(259,380) scale(1.0)" shape-rendering="geometricPrecision"><polygon points="4,2 8,0.8 12,2 12,14 8,15.5 4,14" fill="#3a72c0" stroke="#1d3b6b" stroke-width="0.6"/><polygon points="1,6 8,4 15,5 8,7.5" fill="none" stroke="#e01818" stroke-width="1.3"/><polygon points="1,10.5 8,8.5 15,9.5 8,12" fill="none" stroke="#e01818" stroke-width="1.3"/></g>
<text x="278.92" y="411.5" textLength="138.66" lengthAdjust="spacingAndGlyphs" fill="#000">Make face from wires</text>
<text x="278.92" y="430.5" textLength="63.24" lengthAdjust="spacingAndGlyphs" fill="#000">Extrude...</text>
<g transform="translate(259,418) scale(1.0)" shape-rendering="geometricPrecision"><polygon points="1,10 9,7.5 15,9 15,13 7,15.5 1,14" fill="#3f78c4" stroke="#1d3b6b" stroke-width="0.6"/><polygon points="1,10 9,7.5 15,9 7,11.5" fill="#6fa0dc"/><polygon points="5,6 8.5,1 12,6 10,6 10,10 7,10 7,6" fill="#4a86d0" stroke="#1d3b6b" stroke-width="0.6"/></g>
<text x="278.92" y="449.5" textLength="63.80" lengthAdjust="spacingAndGlyphs" fill="#000">Revolve...</text>
<g transform="translate(259,437) scale(1.0)" shape-rendering="geometricPrecision"><path d="M7.36,15.27 A7.3,7.3 0 0 1 7.36,0.73 L7.72,4.81 A3.2,3.2 0 0 0 7.72,11.19 Z" fill="#4a80c8" stroke="#1d3b6b" stroke-width="0.6"/><path d="M13.59,12.69 A7.3,7.3 0 0 1 7.75,15.30 L7.89,11.20 A3.2,3.2 0 0 0 10.45,10.06 Z" fill="#6fa0dc" stroke="#1d3b6b" stroke-width="0.6"/><path d="M10.33,1.61 A6.8,6.8 0 0 1 13.89,11.40 L11.64,10.10 A4.2,4.2 0 0 0 9.44,4.05 Z" fill="#6a9cd8" stroke="#1d3b6b" stroke-width="0.6"/><polygon points="8.8,0.8 14,2.5 11,5.5" fill="#6a9cd8" stroke="#1d3b6b" stroke-width="0.5"/><circle cx="8" cy="8" r="1.3" fill="#4a80c8" stroke="#1d3b6b" stroke-width="0.5"/></g>
<text x="278.92" y="468.5" textLength="70.80" lengthAdjust="spacingAndGlyphs" fill="#000">Mirroring...</text>
<g transform="translate(259,456) scale(1.0)" shape-rendering="geometricPrecision"><polygon points="1.5,4 6,2 6,12 1.5,14" fill="#2c5ea6" stroke="#1d3b6b" stroke-width="0.6"/><polygon points="10,2 14.5,4 14.5,14 10,12" fill="#6a9cd8" stroke="#1d3b6b" stroke-width="0.6"/><rect x="7.2" y="0.5" width="1.6" height="3" rx="0.8" fill="#c81010"/><rect x="7.2" y="6.5" width="1.6" height="3" rx="0.8" fill="#c81010"/><rect x="7.2" y="12.5" width="1.6" height="3" rx="0.8" fill="#c81010"/></g>
<text x="278.92" y="487.5" textLength="42.86" lengthAdjust="spacingAndGlyphs" fill="#000">Fillet...</text>
<g transform="translate(259,475) scale(1.0)" shape-rendering="geometricPrecision"><path d="M1,11 C1,6 3,3.5 8,2 L15,3.5 C11,5 9,7 8,12 Z" fill="#5590d4" stroke="#1d3b6b" stroke-width="0.6"/><polygon points="1,11 8,12 8,15 1,14" fill="#3a70b8" stroke="#1d3b6b" stroke-width="0.6"/></g>
<text x="279.47" y="506.5" textLength="67.07" lengthAdjust="spacingAndGlyphs" fill="#000">Chamfer...</text>
<g transform="translate(259,494) scale(1.0)" shape-rendering="geometricPrecision"><polygon points="1,10 7,3 15,4 9,11.5" fill="#5590d4" stroke="#1d3b6b" stroke-width="0.6"/><polygon points="1,10 9,11.5 9,15 1,13" fill="#3a70b8" stroke="#1d3b6b" stroke-width="0.6"/></g>
<text x="279.47" y="525.5" textLength="132.95" lengthAdjust="spacingAndGlyphs" fill="#000">Create ruled surface</text>
<g transform="translate(259,513) scale(1.0)" shape-rendering="geometricPrecision"><polygon points="2,4 14,1.2 14,11.5 2,14.5" fill="#5590d4" stroke="#1d3b6b" stroke-width="0.5"/><rect x="1" y="3.5" width="1.8" height="11.5" fill="#d81010"/><rect x="13.2" y="0.5" width="1.8" height="11.5" fill="#d81010"/></g>
<text x="278.92" y="544.5" textLength="36.81" lengthAdjust="spacingAndGlyphs" fill="#000">Loft...</text>
<g transform="translate(259,532) scale(1.0)" shape-rendering="geometricPrecision"><polygon points="6,3 13,1.5 13,13 6,15 1,12 1,7" fill="#3a70b8" stroke="#1d3b6b" stroke-width="0.6"/><polygon points="6,3 13,1.5 13,13 6,15" fill="none" stroke="#d81010" stroke-width="1.2"/><rect x="1" y="7" width="5" height="6" fill="#2a5aa0" stroke="#d81010" stroke-width="1.2"/></g>
<text x="279.34" y="563.5" textLength="55.53" lengthAdjust="spacingAndGlyphs" fill="#000">Sweep...</text>
<g transform="translate(259,551) scale(1.0)" shape-rendering="geometricPrecision"><polygon points="2,9 6,3 14,2 10,12 4,14" fill="#4a80c8" stroke="#1d3b6b" stroke-width="0.6"/><polyline points="3,8 7,3 14,3" fill="none" stroke="#d81010" stroke-width="1.2"/><rect x="1" y="9" width="5" height="5" fill="#2a5aa0" stroke="#d81010" stroke-width="1.2"/><circle cx="14.5" cy="1.5" r="1.2" fill="#d81010"/></g>
<text x="279.21" y="582.5" textLength="73.87" lengthAdjust="spacingAndGlyphs" fill="#000">3D Offset...</text>
<g transform="translate(259,570) scale(1.0)" shape-rendering="geometricPrecision"><polygon points="8,0.5 12,4.5 10,4.5 10,7 6,7 6,4.5 4,4.5" fill="#4a86d0" stroke="#1d3b6b" stroke-width="0.5"/><polygon points="2,9 14,8 12,10 1,10.5" fill="#4a86d0" stroke="#1d3b6b" stroke-width="0.5"/><polygon points="2,12.5 14,11.5 12,13.8 1,14.2" fill="#4a86d0" stroke="#1d3b6b" stroke-width="0.5"/></g>
<text x="279.25" y="601.5" textLength="73.87" lengthAdjust="spacingAndGlyphs" fill="#000">2D Offset...</text>
<g transform="translate(259,589) scale(1.0)" shape-rendering="geometricPrecision"><path d="M1.5,3.5 L12,1.5 C14.5,1.5 14.5,5 14,9 C13,13 9,15 5,15 L5,13.5 C9,13 11.5,10 11.5,6 C11.5,4.5 10.5,4 8,4.5 L1.5,5.8 Z" fill="#4a86d0" stroke="#1d3b6b" stroke-width="0.5"/><path d="M4,8 L9,6.5 C9.5,9 8.5,11 5,11.5 L5,10 C6.5,10 7,9 7,8.5 L4,9.5 Z" fill="#4a86d0" stroke="#1d3b6b" stroke-width="0.5"/></g>
<text x="280.24" y="620.5" textLength="76.65" lengthAdjust="spacingAndGlyphs" fill="#000">Thickness...</text>
<g transform="translate(259,608) scale(1.0)" shape-rendering="geometricPrecision"><polygon points="1,7 7,4.5 15,6 9,8.5" fill="#6aa0dc" stroke="#1d3b6b" stroke-width="0.6"/><polygon points="1,7 9,8.5 9,12.5 1,11" fill="#3a72c0" stroke="#1d3b6b" stroke-width="0.6"/><polygon points="9,8.5 15,6 15,10 9,12.5" fill="#2a5aa0" stroke="#1d3b6b" stroke-width="0.6"/></g>
<rect x="259" y="629" width="218" height="1" fill="#a8a49c" />
<rect x="259" y="630" width="218" height="1" fill="#ffffff" />
<text x="280.10" y="647.5" textLength="88.61" lengthAdjust="spacingAndGlyphs" fill="#000">Attachment...</text>
<g transform="translate(259,635) scale(1.0)" shape-rendering="geometricPrecision"><polygon points="1,10 11,1.5 14.5,5 6,14.5" fill="#4a86d0" stroke="#1d3b6b" stroke-width="0.6"/><polygon points="3.5,10 10.5,3.5 12.5,6 6,12" fill="#dcdad5"/><path d="M4,9 C6,5 9,4 12,6" fill="none" stroke="#d81010" stroke-width="1.2"/><path d="M6,11 C8,8 10,7 12.5,8.5" fill="none" stroke="#d81010" stroke-width="1.2"/><path d="M7.5,13 C9,11 11,10 13,11" fill="none" stroke="#d81010" stroke-width="1.2"/></g>
</svg></body></html>
